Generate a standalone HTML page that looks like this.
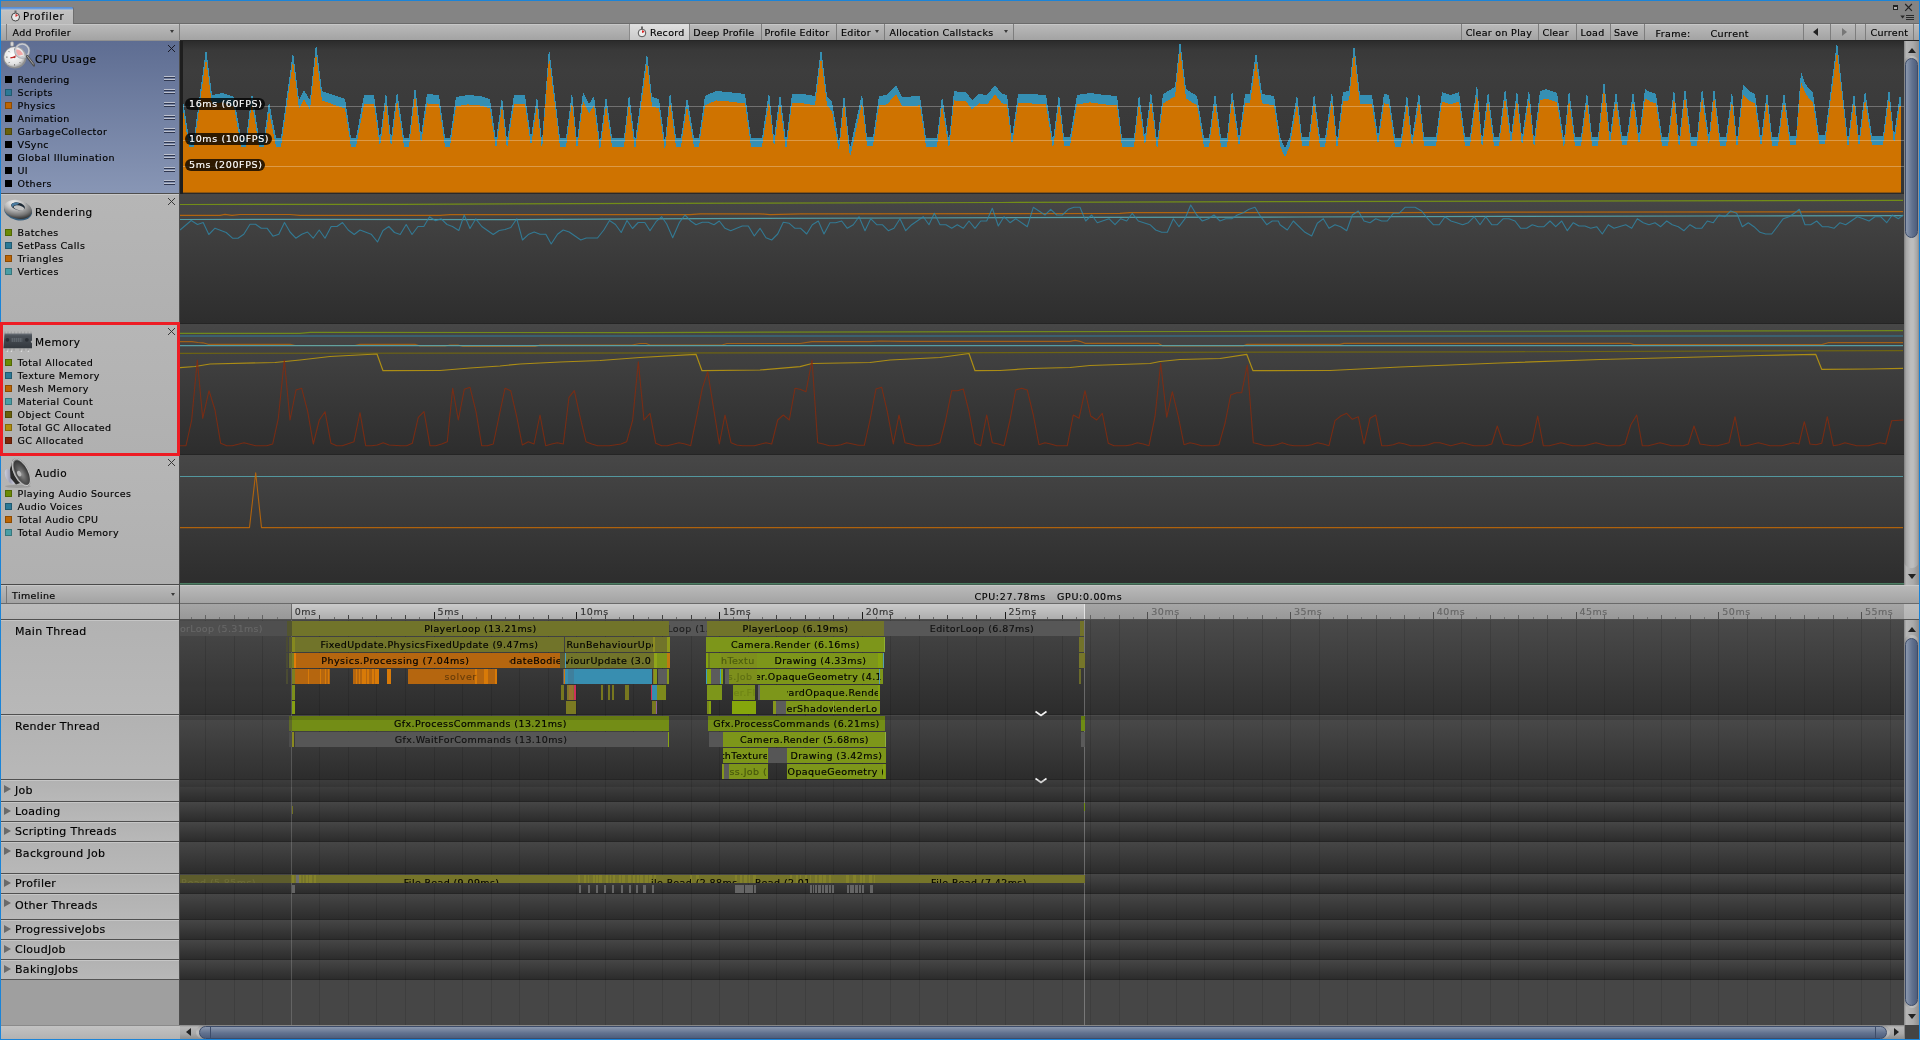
<!DOCTYPE html><html><head><meta charset="utf-8"><title>Profiler</title><style>
*{box-sizing:border-box;margin:0;padding:0}
html,body{width:1920px;height:1040px;overflow:hidden}
body{-webkit-text-stroke:.15px currentColor;background:#848484;font-family:"DejaVu Sans","Liberation Sans",sans-serif;font-size:9.5px;letter-spacing:.4px;color:#000;position:relative;-webkit-font-smoothing:antialiased}
.a{position:absolute}
.t{position:absolute;white-space:nowrap;line-height:12px}
.tb{position:absolute;top:24px;height:16px;background:linear-gradient(#c7c7c7 0,#c7c7c7 1px,#b9b9b9 1px,#a3a3a3);border-left:1px solid #7d7d7d;}
.tb span{position:absolute;top:3px;letter-spacing:.3px;white-space:nowrap;line-height:12px}
.sq{position:absolute;width:7px;height:7px;border:1px solid rgba(0,0,0,.25)}
.lg{position:absolute;left:17.5px;white-space:nowrap;line-height:12px;font-size:9.5px;letter-spacing:.42px}
.ttl{position:absolute;left:35px;white-space:nowrap;line-height:14px;font-size:10.5px;letter-spacing:.45px}
.ham{position:absolute;left:164px;width:11px;height:5px;border-top:1px solid #bcc1cf;background:linear-gradient(#2f3750 0,#2f3750 1px,transparent 1px,transparent 2px,#bcc1cf 2px,#bcc1cf 3px,#2f3750 3px,#2f3750 4px,transparent 4px)}
.bar{position:absolute;height:15px;overflow:hidden;white-space:nowrap;text-align:center;line-height:15px;font-size:9.5px;letter-spacing:.41px;color:#000}
.sec{position:absolute;left:0;width:1724px;background:linear-gradient(#464646,#2c2c2c calc(100% - 1px),#252525 calc(100% - 1px))}
.row{position:absolute;left:1px;width:178px;background:linear-gradient(#b2b2b2,#b8b8b8);border-top:1px solid #505050;box-shadow:inset 0 1px 0 #c6c6c6}
.row span{position:absolute;left:14px;top:3px;font-size:11px;letter-spacing:.3px;line-height:14px;white-space:nowrap}
.row i{position:absolute;left:3px;top:5px;width:0;height:0;border-left:7.5px solid #6a6a6a;border-top:4px solid transparent;border-bottom:4px solid transparent}
.pill{position:absolute;left:185px;height:12px;border-radius:6px;background:rgba(0,0,0,.78);color:#fff;font-size:9.5px;letter-spacing:.62px;line-height:12px;padding-left:4px;white-space:nowrap}
</style></head><body><div id="root" style="position:absolute;left:0;top:0;width:1920px;height:1040px;will-change:transform">
<div class="a" style="left:74px;top:23px;width:1845px;height:1px;background:#6b6b6b"></div>
<div class="a" style="left:1px;top:7px;width:73px;height:17px;background:linear-gradient(#4d8ad8 0,#74a2dd 2px,#c8c8c8 3px,#c2c2c2 4px,#b8b8b8);border-top:0 solid #4d8fdb;border-right:1px solid #6e6e6e;border-top-right-radius:2px"></div>
<svg class="a" style="left:10px;top:10px" width="11" height="12" viewBox="0 0 11 12"><circle cx="5.5" cy="7" r="4" fill="#e8e8e8" stroke="#444" stroke-width="1"/><rect x="4.5" y="0.5" width="2" height="2.5" fill="#666"/><path d="M5.5 7 L5.5 4 A3 3 0 0 1 8 5.5 Z" fill="#d33"/></svg>
<div class="t" style="left:23px;top:10px;font-size:10.2px;letter-spacing:.7px;line-height:13px">Profiler</div>
<svg class="a" style="left:1892px;top:3px" width="24" height="20" viewBox="0 0 24 20"><rect x="1.5" y="2.5" width="4" height="4" fill="#b0b0b0" stroke="#222" stroke-width="1"/><rect x="1" y="2" width="5" height="2" fill="#222"/><path d="M13.2 1 L19.9 7.9 M19.9 1 L13.2 7.9" stroke="#222" stroke-width="1.15"/><path d="M8.3 12.6 h4.6 l-2.3 2.9z" fill="#2a2a2a"/><path d="M14 12.5h8M14 14.5h8M14 16.5h8" stroke="#2a2a2a" stroke-width="1"/></svg>
<div class="a" style="left:1px;top:24px;width:1918px;height:16px;background:linear-gradient(#c7c7c7 0,#c7c7c7 1px,#b9b9b9 1px,#a3a3a3)"></div>
<div class="a" style="left:1px;top:40px;width:1918px;height:1px;background:#909090"></div><div class="a" style="left:180px;top:40px;width:1739px;height:1px;background:#262626"></div>
<div class="tb" style="left:6px;width:174px;border-right:1px solid #7d7d7d;"><span style="left:5.5px">Add Profiler</span><i class="a" style="left:163px;top:6px;border-top:3px solid #3a3a3a;border-left:2.5px solid transparent;border-right:2.5px solid transparent"></i></div>
<div class="tb" style="left:629px;width:60px;background:linear-gradient(#e0e0e0,#cacaca);border-left:1px solid #8a8a8a"><span style="left:20px">Record</span><svg class="a" style="left:7px;top:2px" width="10" height="12" viewBox="0 0 10 12"><circle cx="5" cy="7" r="3.8" fill="#eee" stroke="#555" stroke-width="1"/><rect x="4" y="0.5" width="2" height="2.5" fill="#666"/><path d="M5 7 L5 4.2 A2.8 2.8 0 0 1 7.6 6 Z" fill="#d22"/></svg></div>
<div class="tb" style="left:689px;width:72px;"><span style="left:3.2999999999999545px">Deep Profile</span></div>
<div class="tb" style="left:761px;width:75px;"><span style="left:2.5px">Profile Editor</span></div>
<div class="tb" style="left:836px;width:48px;"><span style="left:4px">Editor</span><i class="a" style="left:38px;top:6px;border-top:3px solid #3a3a3a;border-left:2.5px solid transparent;border-right:2.5px solid transparent"></i></div>
<div class="tb" style="left:884px;width:130px;border-right:1px solid #7d7d7d;"><span style="left:4.399999999999977px">Allocation Callstacks</span><i class="a" style="left:119px;top:6px;border-top:3px solid #3a3a3a;border-left:2.5px solid transparent;border-right:2.5px solid transparent"></i></div>
<div class="tb" style="left:1461px;width:77px;"><span style="left:3.7000000000000455px">Clear on Play</span></div>
<div class="tb" style="left:1538px;width:38px;"><span style="left:3.5px">Clear</span></div>
<div class="tb" style="left:1576px;width:34px;"><span style="left:3.5px">Load</span></div>
<div class="tb" style="left:1610px;width:35px;border-right:1px solid #7d7d7d;"><span style="left:3px">Save</span></div>
<div class="t" style="left:1655.5px;top:28px">Frame:</div>
<div class="t" style="left:1710.5px;top:28px">Current</div>
<div class="tb" style="left:1803px;width:27px"><i class="a" style="left:9px;top:4px;border-right:5px solid #222;border-top:4px solid transparent;border-bottom:4px solid transparent"></i></div>
<div class="tb" style="left:1830px;width:26px;border-right:1px solid #7d7d7d"><i class="a" style="left:11px;top:4px;border-left:5px solid #777;border-top:4px solid transparent;border-bottom:4px solid transparent"></i></div>
<div class="tb" style="left:1865px;width:49px;border-right:1px solid #7d7d7d;"><span style="left:4.5px">Current</span></div>
<div class="a" style="left:1px;top:41px;width:178px;height:152px;background:linear-gradient(#5e6d92,#8896b5)"></div>
<div class="a" style="left:1px;top:193px;width:178px;height:1px;background:#4e4e4e"></div>
<svg class="a" style="left:1.6px;top:41.2px" width="33.5" height="29.3" viewBox="0 0 32 28">
<defs><radialGradient id="g1" cx="42%" cy="38%" r="68%"><stop offset="0" stop-color="#fff"/><stop offset=".7" stop-color="#e2e2e2"/><stop offset="1" stop-color="#8f8f8f"/></radialGradient></defs>
<rect x="8" y="0.8" width="3.2" height="4.2" rx="1.2" fill="#d6d6d6" stroke="#8a8a8a" stroke-width=".6"/>
<ellipse cx="12.3" cy="15.8" rx="11" ry="10.6" fill="#8e8e8e"/>
<ellipse cx="12" cy="15.4" rx="10" ry="9.6" fill="url(#g1)"/>
<g stroke="#777" stroke-width=".9"><path d="M12 7.2v1.6M12 22v1.6M3.8 15.4h1.6M18.6 15.4h1.6M6.2 9.6l1.1 1.1M16.7 20.1l1.1 1.1M6.2 21.2l1.1-1.1M16.7 10.7l1.1-1.1"/></g>
<path d="M12 15.4 L13.6 8 A8 8 0 0 1 20.2 13 Z" fill="#ee8f8f"/>
<path d="M12 15.4 L8 16.2" stroke="#c62222" stroke-width="1.3"/>
<circle cx="12" cy="15.4" r="1" fill="#a33"/>
<circle cx="19.3" cy="9.3" r="6.6" fill="rgba(255,255,255,.22)" stroke="#c8cbd0" stroke-width="1.7"/>
<circle cx="19.3" cy="9.3" r="7.4" fill="none" stroke="#8d9097" stroke-width=".5"/>
<path d="M24 14.6 L30.6 23.2" stroke="#4e4e4e" stroke-width="2.6" stroke-linecap="round"/>
<path d="M24 14.2 L30.2 22.4" stroke="#b5b5b5" stroke-width=".8"/>
</svg>
<div class="ttl" style="top:52px">CPU Usage</div>
<svg class="a" style="left:167px;top:44px" width="9" height="9" viewBox="0 0 9 9"><path d="M1 1 L8 8 M8 1 L1 8" stroke="#15151f" stroke-width=".95"/></svg>
<div class="sq" style="left:5px;top:76px;background:#000"></div><div class="lg" style="top:74px">Rendering</div>
<div class="ham" style="top:76px"></div>
<div class="sq" style="left:5px;top:89px;background:#2c7996"></div><div class="lg" style="top:87px">Scripts</div>
<div class="ham" style="top:89px"></div>
<div class="sq" style="left:5px;top:102px;background:#bd6503"></div><div class="lg" style="top:100px">Physics</div>
<div class="ham" style="top:102px"></div>
<div class="sq" style="left:5px;top:115px;background:#000"></div><div class="lg" style="top:113px">Animation</div>
<div class="ham" style="top:115px"></div>
<div class="sq" style="left:5px;top:128px;background:#6a610b"></div><div class="lg" style="top:126px">GarbageCollector</div>
<div class="ham" style="top:128px"></div>
<div class="sq" style="left:5px;top:141px;background:#000"></div><div class="lg" style="top:139px">VSync</div>
<div class="ham" style="top:141px"></div>
<div class="sq" style="left:5px;top:154px;background:#000"></div><div class="lg" style="top:152px">Global Illumination</div>
<div class="ham" style="top:154px"></div>
<div class="sq" style="left:5px;top:167px;background:#000"></div><div class="lg" style="top:165px">UI</div>
<div class="ham" style="top:167px"></div>
<div class="sq" style="left:5px;top:180px;background:#000"></div><div class="lg" style="top:178px">Others</div>
<div class="ham" style="top:180px"></div>
<div class="a" style="left:1px;top:194px;width:178px;height:130px;background:linear-gradient(#b6b6b6,#b0b0b0);border-bottom:1px solid #565656;box-shadow:inset 0 1px 0 #c9c9c9"></div>
<svg class="a" style="left:3px;top:198px" width="31" height="24" viewBox="0 0 31 24">
<defs><radialGradient id="g2" cx="32%" cy="22%" r="85%"><stop offset="0" stop-color="#f6f6f6"/><stop offset=".4" stop-color="#bdbdbd"/><stop offset=".75" stop-color="#757575"/><stop offset="1" stop-color="#2b2b2b"/></radialGradient></defs>
<g transform="rotate(13 15 12)">
<ellipse cx="15.2" cy="12.6" rx="14.2" ry="9.6" fill="#3a5f7c"/>
<ellipse cx="14.8" cy="11.4" rx="14.2" ry="9.2" fill="url(#g2)"/>
<ellipse cx="14.2" cy="8.4" rx="7" ry="3.7" fill="#1d2a36"/>
<path d="M7.4 8.4 A7 3.7 0 0 1 15 4.7 L13 7 Q9.5 7.5 9 10.6 Z" fill="#4a7ba0"/>
<ellipse cx="15.4" cy="9.7" rx="5.4" ry="2.3" fill="#c2c2c2"/>
</g>
</svg>
<div class="ttl" style="top:205px">Rendering</div>
<svg class="a" style="left:167px;top:197px" width="9" height="9" viewBox="0 0 9 9"><path d="M1 1 L8 8 M8 1 L1 8" stroke="#333" stroke-width=".95"/></svg>
<div class="sq" style="left:5px;top:229px;background:#6c8b06"></div><div class="lg" style="top:227px">Batches</div>
<div class="sq" style="left:5px;top:242px;background:#2c7996"></div><div class="lg" style="top:240px">SetPass Calls</div>
<div class="sq" style="left:5px;top:255px;background:#bd6503"></div><div class="lg" style="top:253px">Triangles</div>
<div class="sq" style="left:5px;top:268px;background:#4a9ea6"></div><div class="lg" style="top:266px">Vertices</div>
<div class="a" style="left:1px;top:324px;width:178px;height:131px;background:linear-gradient(#b6b6b6,#b0b0b0);border-bottom:1px solid #565656;box-shadow:inset 0 1px 0 #c9c9c9"></div>
<svg class="a" style="left:3px;top:330px" width="31" height="24" viewBox="0 0 31 24">
<defs><linearGradient id="g4" x1="0" y1="0" x2="0" y2="1"><stop offset="0" stop-color="#6a7078"/><stop offset=".15" stop-color="#4b5158"/><stop offset="1" stop-color="#33383e"/></linearGradient></defs>
<path d="M2 4v-2.4M5 4v-2.4M8.3 4v-2.4M11.6 4v-2.4M15 4v-2.4M18.3 4v-2.4M21.6 4v-2.4M25 4v-2.4M28 4v-2.4" stroke="#a2a2a2" stroke-width="1.3"/>
<path d="M3 18.5v2.6M7 18.5v2.6M11 18.5v2.6M17 18.5v2.6M21 18.5v2.6M25 18.5v2.6" stroke="#9c9c9c" stroke-width="1.6" opacity=".7"/>
<circle cx="4.4" cy="21.3" r=".8" fill="#e0e0e0"/><circle cx="8.4" cy="21.3" r=".8" fill="#e0e0e0"/><circle cx="18.4" cy="21.3" r=".8" fill="#e0e0e0"/><circle cx="25.4" cy="21.3" r=".8" fill="#e0e0e0"/>
<path d="M1.5 3.6 H29 V10.4 L27.6 11.8 L29 13.2 V18.3 H0.4 Z" fill="url(#g4)"/>
<circle cx="4.4" cy="9.8" r="1.9" fill="#2b3036"/><circle cx="23.8" cy="9.8" r="1.9" fill="#2b3036"/>
<path d="M8.6 9h10.8M8.6 11h10.8" stroke="#8c949c" stroke-width=".9" stroke-dasharray="1.6 .5" opacity=".8"/>
</svg>
<div class="ttl" style="top:335px">Memory</div>
<svg class="a" style="left:167px;top:327px" width="9" height="9" viewBox="0 0 9 9"><path d="M1 1 L8 8 M8 1 L1 8" stroke="#333" stroke-width=".95"/></svg>
<div class="sq" style="left:5px;top:359px;background:#6c8b06"></div><div class="lg" style="top:357px">Total Allocated</div>
<div class="sq" style="left:5px;top:372px;background:#2c7996"></div><div class="lg" style="top:370px">Texture Memory</div>
<div class="sq" style="left:5px;top:385px;background:#bd6503"></div><div class="lg" style="top:383px">Mesh Memory</div>
<div class="sq" style="left:5px;top:398px;background:#4a9ea6"></div><div class="lg" style="top:396px">Material Count</div>
<div class="sq" style="left:5px;top:411px;background:#6a610b"></div><div class="lg" style="top:409px">Object Count</div>
<div class="sq" style="left:5px;top:424px;background:#b08d0c"></div><div class="lg" style="top:422px">Total GC Allocated</div>
<div class="sq" style="left:5px;top:437px;background:#7e2508"></div><div class="lg" style="top:435px">GC Allocated</div>
<div class="a" style="left:1px;top:455px;width:178px;height:130px;background:linear-gradient(#b6b6b6,#b0b0b0);border-bottom:1px solid #565656;box-shadow:inset 0 1px 0 #c9c9c9"></div>
<svg class="a" style="left:3px;top:456px" width="31" height="32" viewBox="0 0 31 32">
<defs><radialGradient id="g3" cx="45%" cy="55%" r="60%"><stop offset="0" stop-color="#8a8a8a"/><stop offset=".5" stop-color="#5a5a5a"/><stop offset="1" stop-color="#2e2e2e"/></radialGradient>
<linearGradient id="g5" x1="0" y1="0" x2="1" y2="1"><stop offset="0" stop-color="#dfe1ee"/><stop offset=".5" stop-color="#9ea0b4"/><stop offset="1" stop-color="#e8e8f0"/></linearGradient></defs>
<ellipse cx="15" cy="30.3" rx="13" ry="1.6" fill="rgba(0,0,0,.13)"/>
<ellipse cx="7" cy="20.6" rx="4.2" ry="8.2" fill="url(#g5)" transform="rotate(-27 7 20.6)"/>
<path d="M10 3.5 L7 13 L7.5 22 L13 28.5 L20 26 L14 6 Z" fill="#2a2a2a"/>
<ellipse cx="18.3" cy="16.2" rx="7.6" ry="15.4" fill="#8f8f8f" transform="rotate(-27 18.3 16.2)"/>
<ellipse cx="18.3" cy="16.2" rx="7" ry="14.8" fill="none" stroke="#d4d4d4" stroke-width=".7" transform="rotate(-27 18.3 16.2)"/>
<ellipse cx="18.7" cy="16.5" rx="6" ry="13.4" fill="url(#g3)" transform="rotate(-27 18.7 16.5)"/>
<ellipse cx="16.2" cy="17.6" rx="1.9" ry="2.9" fill="#b9b9b9" transform="rotate(-27 16.2 17.6)"/>
</svg>
<div class="ttl" style="top:466px">Audio</div>
<svg class="a" style="left:167px;top:458px" width="9" height="9" viewBox="0 0 9 9"><path d="M1 1 L8 8 M8 1 L1 8" stroke="#333" stroke-width=".95"/></svg>
<div class="sq" style="left:5px;top:490px;background:#6c8b06"></div><div class="lg" style="top:488px">Playing Audio Sources</div>
<div class="sq" style="left:5px;top:503px;background:#2c7996"></div><div class="lg" style="top:501px">Audio Voices</div>
<div class="sq" style="left:5px;top:516px;background:#bd6503"></div><div class="lg" style="top:514px">Total Audio CPU</div>
<div class="sq" style="left:5px;top:529px;background:#4a9ea6"></div><div class="lg" style="top:527px">Total Audio Memory</div>
<div class="a" style="left:180px;top:41px;width:1724px;height:153px;background:linear-gradient(#2b2b2b 0,#393939 9px,#3d3d3d 30px,#343434 100%)"></div>
<div class="a" style="left:180px;top:194px;width:1724px;height:130px;background:linear-gradient(#474747,#2d2d2d);border-bottom:1px solid #252525"></div>
<div class="a" style="left:180px;top:324px;width:1724px;height:131px;background:linear-gradient(#474747,#2d2d2d);border-bottom:1px solid #252525"></div>
<div class="a" style="left:180px;top:455px;width:1724px;height:129px;background:linear-gradient(#474747,#2d2d2d);border-bottom:1px solid #252525"></div>
<div class="a" style="left:180px;top:584px;width:1724px;height:2px;background:#333"></div>
<svg class="a" style="left:180px;top:41px" width="1724" height="545" viewBox="180 41 1724 545"><polygon shape-rendering="crispEdges" fill="#358fb3" points="183,193 183,100 184,107 189,138 194,138 206,48.5 212,95 222,93 234,97 241,138 246,138 252,92.5 259,138 264,138 269,101.5 276,138 281,138 293,51.5 299,100 304,90 310,100 316,43.5 322,91 333,95 345,99 351,138 356,138 364,95 374,95 380,138.5 386,91.5 391,138.5 397,90.5 404,138 409,138 415,85.5 421,135.5 427,94 439,95 445,138 450,138 456,97 468,95 480,96 490,99 496,140.5 502,96.5 507,140.5 514,95 525,95 531,137.5 537,95.5 542,141.5 549,47.5 560,138 566,138 572,91.5 577,141.5 583,92 589,104 594,96 600,142.5 606,95.5 612,138 624,138 629,93.5 635,141.5 647,52.5 652,97 659,99 665,142.5 670,91.5 676,138 681,138 687,96.5 694,138 699,138 705,96 716,91 728,92 745,94 751,138 762,138 769,91.5 774,138.5 780,93.5 786,141.5 792,94 803,94 815,96 821,47.5 827,96 832,102 839,142.5 844,93.5 850,148.5 862,93.5 867,137 873,137 879,96 887,95 896,85 902,97 920,96 926,138 937,138 942,95.5 949,140.5 954,91 960,92 966,92 972,100 979,94 987,95 995,85 1002,94 1007,95 1012,137 1018,94 1030,94 1046,95 1053,140.5 1059,93.5 1064,137 1070,137 1077,95 1090,93 1105,95 1117,96 1122,138 1134,138 1139,93.5 1145,137.5 1151,90.5 1157,141.5 1163,94 1175,87 1180,39.5 1186,89 1197,96 1204,138 1209,138 1215,92.5 1221,138 1227,138 1232,89.5 1239,138.5 1245,94 1250,94 1256,51.5 1262,94 1274,96 1280,136.5 1285,148.5 1290,136.5 1297,93.5 1302,137 1309,137 1314,92.5 1320,138 1325,138 1332,90.5 1337,141.5 1343,92 1349,91 1354,43.5 1360,95 1372,95 1378,136.5 1384,94 1389,95 1395,138 1401,138 1407,93.5 1412,138.5 1419,91.5 1424,137 1436,137 1442,92 1450,95 1459,92 1465,137 1470,137 1477,83.5 1482,140.5 1488,90.5 1494,137 1499,137 1505,87.5 1511,135.5 1517,89.5 1522,137.5 1529,88.5 1534,140.5 1540,91 1546,89 1557,93 1564,140.5 1569,89.5 1575,137 1581,137 1587,91.5 1592,137 1598,137 1604,79.5 1610,135.5 1616,90.5 1622,136 1627,136 1633,90.5 1639,136.5 1645,89 1650,92 1656,94 1662,137 1668,137 1674,87.5 1679,140.5 1685,86.5 1691,137 1697,137 1702,87.5 1709,137.5 1714,86.5 1720,137 1726,137 1732,90.5 1737,140.5 1743,85 1749,91 1755,94 1761,138.5 1767,90.5 1772,137 1778,137 1784,91.5 1790,136 1796,136 1801,72 1805,83 1809,89 1813,93 1819,135 1825,135 1837,41.5 1848,140.5 1854,91.5 1859,139.5 1865,89.5 1872,136 1883,136 1889,87.5 1894,135.5 1900,94 1901,100 1901,193"/><polygon shape-rendering="crispEdges" fill="#cf7300" points="183,193 183,109.4 184,116.4 189,146.7 194,146.7 206,57.9 212,104.4 222,102.4 234,106.4 241,146.7 246,146.7 252,101.9 259,146.7 264,146.7 269,110.9 276,146.7 281,146.7 293,60.9 299,109.4 304,99.4 310,109.4 316,52.9 322,100.4 333,104.4 345,108.4 351,146.7 356,146.7 364,104.4 374,104.4 380,147.5 386,100.9 391,147.5 397,99.9 404,146.7 409,146.7 415,94.9 421,144.5 427,103.4 439,104.4 445,146.7 450,146.7 456,106.4 468,104.4 480,105.4 490,108.4 496,149.5 502,105.9 507,149.5 514,104.4 525,104.4 531,146.5 537,104.9 542,150.5 549,56.9 560,146.7 566,146.7 572,100.9 577,150.5 583,101.4 589,113.4 594,105.4 600,151.5 606,104.9 612,146.7 624,146.7 629,102.9 635,150.5 647,61.9 652,106.4 659,108.4 665,151.5 670,100.9 676,146.7 681,146.7 687,105.9 694,146.7 699,146.7 705,105.4 716,100.4 728,101.4 745,103.4 751,146.7 762,146.7 769,100.9 774,147.5 780,102.9 786,150.5 792,103.4 803,103.4 815,105.4 821,56.9 827,105.4 832,111.4 839,151.5 844,102.9 850,157.5 862,102.9 867,145.7 873,145.7 879,105.4 887,104.4 896,94.4 902,106.4 920,105.4 926,146.7 937,146.7 942,104.9 949,149.5 954,100.4 960,101.4 966,101.4 972,109.4 979,103.4 987,104.4 995,94.4 1002,103.4 1007,104.4 1012,145.7 1018,103.4 1030,103.4 1046,104.4 1053,149.5 1059,102.9 1064,145.7 1070,145.7 1077,104.4 1090,102.4 1105,104.4 1117,105.4 1122,146.7 1134,146.7 1139,102.9 1145,146.5 1151,99.9 1157,150.5 1163,103.4 1175,96.4 1180,48.9 1186,98.4 1197,105.4 1204,146.7 1209,146.7 1215,101.9 1221,146.7 1227,146.7 1232,98.9 1239,147.5 1245,103.4 1250,103.4 1256,60.9 1262,103.4 1274,105.4 1280,145.5 1285,157.5 1290,145.5 1297,102.9 1302,145.7 1309,145.7 1314,101.9 1320,146.7 1325,146.7 1332,99.9 1337,150.5 1343,101.4 1349,100.4 1354,52.9 1360,104.4 1372,104.4 1378,145.5 1384,103.4 1389,104.4 1395,146.7 1401,146.7 1407,102.9 1412,147.5 1419,100.9 1424,145.7 1436,145.7 1442,101.4 1450,104.4 1459,101.4 1465,145.7 1470,145.7 1477,92.9 1482,149.5 1488,99.9 1494,145.7 1499,145.7 1505,96.9 1511,144.5 1517,98.9 1522,146.5 1529,97.9 1534,149.5 1540,100.4 1546,98.4 1557,102.4 1564,149.5 1569,98.9 1575,145.7 1581,145.7 1587,100.9 1592,145.7 1598,145.7 1604,88.9 1610,144.5 1616,99.9 1622,144.7 1627,144.7 1633,99.9 1639,145.5 1645,98.4 1650,101.4 1656,103.4 1662,145.7 1668,145.7 1674,96.9 1679,149.5 1685,95.9 1691,145.7 1697,145.7 1702,96.9 1709,146.5 1714,95.9 1720,145.7 1726,145.7 1732,99.9 1737,149.5 1743,94.4 1749,100.4 1755,103.4 1761,147.5 1767,99.9 1772,145.7 1778,145.7 1784,100.9 1790,144.7 1796,144.7 1801,81.4 1805,92.4 1809,98.4 1813,102.4 1819,143.7 1825,143.7 1837,50.9 1848,149.5 1854,100.9 1859,148.5 1865,98.9 1872,144.7 1883,144.7 1889,96.9 1894,144.5 1900,103.4 1901,109.4 1901,193"/><rect x="180" y="192.6" width="1724" height="1.4" fill="#2a2a2a"/><line x1="183" x2="1904" y1="106.5" y2="106.5" stroke="#fff" stroke-opacity=".28" stroke-width="1"/><line x1="183" x2="1904" y1="140.5" y2="140.5" stroke="#fff" stroke-opacity=".28" stroke-width="1"/><line x1="183" x2="1904" y1="166.5" y2="166.5" stroke="#fff" stroke-opacity=".28" stroke-width="1"/><polyline fill="none" stroke="#7a9a10" stroke-width="1.2" stroke-opacity="0.85" stroke-linejoin="round" points="180,204.5 400,204.3 650,203.3 1000,202.5 1400,201.3 1903,200.3"/><polyline fill="none" stroke="#c46a05" stroke-width="1.2" stroke-opacity="0.85" stroke-linejoin="round" points="180,215.3 220,215.3 225,214.3 232,215.3 240,214.5 290,214.5 300,215.4 440,215.4 450,214.6 690,214.6 700,213.8 760,213.8 770,214.6 800,213.8 1120,213.4 1130,212.6 1400,212.6 1500,212.2 1800,211.8 1903,211.6"/><polyline fill="none" stroke="#58adb5" stroke-width="1.2" stroke-opacity="0.85" stroke-linejoin="round" points="180,219.5 300,219.3 500,219.6 700,218.6 900,218 1100,217.4 1300,217 1500,216.4 1700,216 1903,215.6"/><polyline fill="none" stroke="#2f86a6" stroke-width="1.1" stroke-opacity="0.82" stroke-linejoin="round" points="180,230 180.0,230.0 191.2,220.5 197.5,224.5 203.2,222.5 208.8,234.5 215.0,228.2 226.2,232.5 232.5,238.2 238.0,238.2 243.8,234.2 250.0,224.2 255.5,224.2 261.2,228.2 267.0,228.2 273.0,236.2 278.8,234.2 284.5,222.5 290.0,232.0 295.8,238.2 301.8,234.2 307.5,232.0 313.2,238.2 319.2,230.0 325.0,238.2 331.2,226.5 337.0,226.5 342.5,222.5 348.2,230.0 354.2,234.5 360.0,230.0 371.2,234.2 377.5,242.0 383.0,230.5 388.8,226.5 394.5,232.5 400.2,234.5 406.2,224.5 412.0,234.5 418.0,226.5 423.8,226.5 429.5,216.8 435.5,220.8 441.2,218.8 447.0,224.5 452.5,226.5 458.8,230.5 464.2,215.0 470.0,228.5 475.8,218.8 481.8,226.5 493.2,234.5 499.2,230.5 505.0,229.5 510.8,227.5 516.8,218.8 522.5,240.0 528.8,234.2 534.2,232.0 540.0,234.2 545.8,234.2 551.2,244.0 557.5,234.2 563.2,230.0 569.2,232.0 580.8,240.0 586.2,238.0 597.5,238.0 603.8,230.0 609.5,220.5 615.5,224.5 621.2,232.5 627.0,220.5 632.5,228.5 638.2,222.5 644.2,222.5 645.0,222.7 650.0,230.7 656.0,221.7 661.7,216.7 666.7,224.0 672.7,237.7 679.3,222.7 685.0,215.0 690.7,221.0 696.0,224.7 702.3,222.3 708.3,222.3 714.0,224.7 719.3,221.0 725.0,228.3 730.7,230.7 736.7,228.3 742.3,226.0 748.3,226.0 754.3,236.0 760.0,228.3 766.0,237.7 771.7,240.0 777.7,234.0 783.3,222.3 789.3,223.3 795.0,228.3 800.7,228.3 806.7,234.0 812.3,224.7 818.3,221.0 824.0,234.0 830.0,222.7 835.7,222.7 841.7,221.0 847.3,228.3 853.3,224.7 859.0,216.7 865.0,230.7 870.7,218.7 876.7,224.7 882.3,224.7 888.3,230.7 894.0,228.3 900.0,218.7 905.7,230.7 911.7,224.7 923.3,216.7 929.0,224.7 934.3,213.3 940.0,224.7 946.0,224.7 951.7,228.3 957.3,224.7 963.3,228.3 969.0,221.0 975.0,228.3 980.7,221.0 986.7,221.0 992.3,208.3 998.3,226.0 1004.0,216.7 1010.0,222.7 1015.7,218.7 1027.3,226.7 1033.3,207.3 1045.0,215.0 1050.7,209.3 1056.7,215.0 1062.3,215.0 1068.3,209.3 1074.0,207.3 1080.0,207.3 1085.7,221.0 1091.7,215.0 1097.3,222.7 1109.0,218.7 1115.0,224.7 1120.7,218.7 1126.7,221.0 1132.3,213.3 1138.3,221.0 1150.0,224.7 1155.7,230.0 1161.7,232.3 1167.3,232.3 1173.3,218.7 1179.0,226.7 1185.0,218.7 1190.7,205.0 1196.7,215.0 1202.3,221.0 1208.3,218.7 1214.0,215.0 1220.0,221.0 1225.7,218.7 1231.7,218.7 1237.3,215.0 1243.3,212.7 1249.0,209.3 1255.0,207.3 1260.7,216.7 1266.7,224.7 1272.3,221.0 1278.3,221.0 1280.0,224.7 1287.3,230.0 1293.3,221.0 1305.0,232.3 1311.7,236.0 1317.3,223.3 1323.3,218.7 1329.0,228.3 1335.0,224.7 1340.7,226.7 1346.7,230.7 1352.3,215.0 1358.3,211.0 1364.0,221.0 1370.0,222.7 1375.7,218.7 1381.7,221.0 1387.3,221.0 1393.3,213.3 1399.0,213.3 1405.0,207.3 1415.0,207.3 1421.7,211.0 1427.7,218.7 1433.3,224.7 1439.3,224.7 1445.0,216.7 1451.0,221.0 1456.7,222.7 1462.7,224.7 1468.3,222.7 1474.3,216.7 1480.0,224.7 1485.7,216.7 1491.7,224.7 1497.3,224.7 1503.3,218.7 1509.0,218.7 1515.0,221.0 1520.7,228.3 1526.7,228.3 1532.3,224.7 1538.3,226.7 1544.0,226.7 1550.0,221.0 1555.7,226.7 1561.7,221.0 1567.3,230.7 1573.3,222.7 1579.0,226.0 1585.0,226.0 1590.7,228.3 1596.7,226.7 1602.3,234.0 1608.3,224.7 1614.0,228.3 1625.7,224.7 1631.7,228.3 1637.3,218.7 1643.3,222.7 1649.0,224.7 1655.0,222.7 1660.7,226.7 1666.7,221.0 1672.3,224.7 1678.3,226.7 1684.0,230.7 1690.0,224.7 1695.7,228.3 1701.7,228.3 1707.3,221.0 1713.3,222.7 1719.0,215.0 1725.0,216.7 1730.7,211.0 1736.7,213.3 1742.3,226.7 1748.3,222.7 1754.0,226.7 1760.0,232.3 1765.7,234.0 1771.7,234.0 1783.3,218.7 1789.0,216.7 1795.0,212.7 1799.3,209.3 1805.0,224.7 1810.7,224.7 1816.7,221.0 1822.3,226.7 1828.3,226.7 1834.0,228.3 1840.0,222.7 1845.7,224.7 1857.3,216.7 1863.3,218.7 1869.0,221.0 1875.0,216.7 1880.7,216.7 1886.7,222.7 1892.3,215.0 1898.3,218.7 1903.3,215.0"/><polyline fill="none" stroke="#7a9a10" stroke-width="1.2" stroke-opacity="0.8" stroke-linejoin="round" points="180,333.4 300,333.3 310,332.4 640,332.6 900,331.8 1200,331.5 1600,331.2 1903,330.6"/><polyline fill="none" stroke="#2f86a6" stroke-width="1.2" stroke-opacity="0.85" stroke-linejoin="round" points="180,336 1903,336"/><polyline fill="none" stroke="#c46a05" stroke-width="1.2" stroke-opacity="0.72" stroke-linejoin="round" points="180,341.7 192,341.7 198,342.5 203,342.8 208,344.3 290,344.3 295,345.5 355,345.5 360,344.3 415,344.3 420,346 445,346 450,345 458,345 463,346.5 535,346.5 540,345 632,345 640,343.5 646,343.5 650,345 722,345 727,343.5 800,343.5 812,341.7 870,341.7 880,341 900,341.3 1070,341.3 1075,340.3 1080,341.3 1085,343.3 1158,343.3 1163,346 1243,346 1247,344.3 1340,344.3 1344,343.3 1630,343.3 1634,344.6 1822,344.6 1828,342.7 1903,342.7"/><polyline fill="none" stroke="#58adb5" stroke-width="1.2" stroke-opacity="0.85" stroke-linejoin="round" points="180,345.7 1903,345.7"/><polyline fill="none" stroke="#72680d" stroke-width="1.2" stroke-opacity="0.9" stroke-linejoin="round" points="180,353.3 900,352.8 1500,351.8 1903,350.6"/><polyline fill="none" stroke="#b8960f" stroke-width="1.2" stroke-opacity="0.9" stroke-linejoin="round" points="180,367.7 195,366.5 210,364 275,362.5 300,360 330,356.5 377,354 383,370.7 440,370.5 470,368 500,366 520,364 560,362 600,360.5 640,357.5 696,354.3 702,370.7 760,370 800,366.7 812,363.5 870,362.5 890,360 940,357.5 969,353.5 975,370.7 1000,370.5 1030,368.5 1070,367.5 1090,365.5 1150,363.5 1160,361.5 1180,359.5 1220,358.5 1246.7,354.3 1253,370.7 1330,370.5 1400,367 1500,363 1600,359.5 1700,357 1760,355.5 1815.7,354.3 1821.7,369.3 1870,369 1903,368.3"/><polyline fill="none" stroke="#8a2a0c" stroke-width="1.1" stroke-opacity="0.8" stroke-linejoin="round" points="180,445.7 180.0,445.7 186.0,445.7 191.7,420.0 197.3,360.0 202.7,418.3 209.0,390.7 215.0,410.0 220.7,443.3 226.7,445.7 232.3,445.7 244.0,442.7 255.7,445.7 266.7,445.7 272.7,444.0 278.3,418.3 284.3,360.0 290.0,420.0 296.0,390.0 301.7,388.3 307.7,411.7 313.3,444.0 319.3,420.0 325.0,411.7 331.0,443.3 336.7,445.7 342.3,445.7 354.0,441.7 360.0,412.7 365.7,445.7 371.7,445.7 377.3,445.0 383.3,442.7 389.0,445.0 400.7,445.7 406.7,445.7 412.3,443.3 418.3,417.3 424.0,411.7 430.0,445.7 435.7,445.7 441.7,444.0 447.3,441.7 452.7,388.3 458.3,420.0 464.3,389.3 470.0,387.3 476.0,411.7 481.7,445.7 487.3,445.7 493.3,444.0 499.0,416.7 505.0,388.3 510.7,390.7 516.7,416.7 522.3,445.0 528.3,441.7 534.0,444.0 540.0,415.0 545.7,445.7 551.7,444.0 557.3,442.7 563.3,444.0 569.0,397.3 574.3,390.7 580.0,416.7 586.0,441.7 591.7,444.0 597.7,445.7 609.3,445.7 621.0,444.0 626.7,441.7 632.7,420.0 638.3,361.7 644.0,420.0 650.0,413.3 655.7,443.3 661.7,445.7 667.3,445.7 679.0,442.7 685.0,444.0 690.7,445.7 696.7,416.7 702.3,388.3 707.7,371.7 713.3,406.7 719.3,444.0 725.0,415.0 731.0,442.7 736.7,445.0 742.7,445.7 754.3,445.7 766.0,442.7 771.7,444.0 777.7,420.0 783.3,415.0 789.3,420.0 795.0,388.3 800.0,389.3 806.0,391.7 812.0,360.0 817.7,442.7 823.3,444.0 829.3,445.7 835.0,445.7 841.0,444.7 846.7,442.7 852.7,444.0 858.3,445.3 864.3,445.3 870.0,420.0 876.0,389.0 881.7,387.3 887.3,411.7 893.3,444.0 899.0,415.0 905.0,442.7 910.7,444.0 916.7,445.7 928.3,445.7 934.0,444.7 940.0,442.7 945.7,420.0 951.7,390.7 957.3,390.7 963.3,389.0 969.0,411.7 975.0,443.3 980.7,445.7 986.7,415.0 992.3,442.7 998.3,444.0 1004.0,445.7 1010.0,420.0 1015.7,390.0 1021.7,388.3 1027.3,390.0 1033.3,415.0 1039.0,444.7 1045.0,442.7 1050.7,444.0 1056.7,445.7 1067.3,445.7 1073.3,415.0 1079.0,418.3 1085.0,390.7 1090.7,416.0 1096.7,420.0 1102.3,413.3 1108.3,443.3 1114.0,445.7 1125.7,445.7 1131.7,444.7 1137.3,442.7 1143.3,444.0 1149.0,445.7 1155.0,416.7 1160.7,363.3 1166.7,417.3 1172.3,391.7 1178.3,416.7 1184.0,444.7 1190.0,442.7 1195.7,444.0 1201.7,445.7 1213.3,445.7 1219.0,444.7 1225.0,423.3 1230.7,395.0 1236.7,392.7 1241.7,392.7 1247.3,365.0 1253.3,442.7 1259.0,444.0 1265.0,445.7 1270.7,445.7 1276.7,444.7 1282.3,442.7 1288.3,444.7 1294.0,445.7 1305.7,445.7 1311.7,444.7 1317.3,442.7 1323.3,444.0 1329.0,445.7 1335.0,420.7 1340.7,416.0 1346.7,413.3 1352.3,419.3 1358.3,416.7 1364.0,444.0 1370.0,418.3 1375.7,415.0 1381.7,445.7 1387.3,445.7 1393.3,444.7 1399.0,442.7 1405.0,444.0 1410.7,445.7 1422.3,445.7 1428.3,444.7 1434.0,442.7 1440.0,442.7 1450.7,445.7 1462.3,442.7 1474.0,445.7 1485.7,445.7 1491.7,444.0 1497.3,426.0 1503.3,444.0 1515.0,445.7 1520.7,445.7 1532.3,441.7 1537.7,416.0 1543.3,445.7 1549.3,445.7 1561.0,442.7 1572.7,445.7 1584.3,445.7 1596.0,442.7 1607.7,445.7 1619.3,445.7 1625.0,444.0 1630.7,425.0 1636.7,415.0 1642.3,445.7 1648.3,445.7 1660.0,442.7 1671.7,445.7 1683.3,445.7 1688.3,444.0 1694.0,426.0 1700.0,444.0 1711.7,445.7 1717.3,445.7 1729.0,442.7 1735.0,416.7 1740.7,445.7 1746.7,445.7 1758.3,442.7 1770.0,445.7 1781.7,445.7 1793.3,442.7 1799.0,444.0 1804.3,421.7 1810.0,444.0 1816.0,444.7 1821.7,443.3 1827.3,416.7 1833.3,445.7 1839.3,444.7 1845.0,442.7 1856.7,445.7 1868.3,445.7 1880.0,442.7 1885.7,444.0 1891.7,420.7 1903.3,420.0"/><polyline fill="none" stroke="#58adb5" stroke-width="1.1" stroke-opacity="0.8" stroke-linejoin="round" points="180,476.5 1903,476.5"/><polyline fill="none" stroke="#c46a05" stroke-width="1.1" stroke-opacity="0.85" stroke-linejoin="round" points="180,527.6 249.5,527.6 255.7,472.8 261.5,527.6 1903,527.6"/><rect x="180" y="583" width="1724" height="1.6" fill="#4b7d62"/></svg>
<div class="pill" style="top:98px;width:80px">16ms (60FPS)</div>
<div class="pill" style="top:133px;width:87px">10ms (100FPS)</div>
<div class="pill" style="top:159px;width:80px">5ms (200FPS)</div>
<div class="a" style="left:1px;top:584px;width:178px;height:1px;background:#4a4a4a"></div>
<div class="a" style="left:1px;top:585px;width:1918px;height:18px;background:linear-gradient(#c7c7c7 0,#c7c7c7 1px,#b9b9b9 1px,#a3a3a3)"></div>
<div class="a" style="left:1px;top:603px;width:1918px;height:1px;background:#6a6a6a"></div>
<div class="a" style="left:6px;top:586px;width:174px;height:17px;border-left:1px solid #777;border-right:1px solid #777"><span class="t" style="left:5px;top:4px">Timeline</span><i class="a" style="left:164px;top:7px;border-top:3px solid #3a3a3a;border-left:2.5px solid transparent;border-right:2.5px solid transparent"></i></div>
<div class="t" style="left:974.5px;top:591px;letter-spacing:.68px">CPU:27.78ms &nbsp; GPU:0.00ms</div>
<div class="a" style="left:1px;top:604px;width:178px;height:16px;background:linear-gradient(#bcbcbc,#b6b6b6)"></div>
<div class="a" style="left:1px;top:979px;width:178px;height:46px;background:#9f9f9f;border-top:1px solid #555"></div>
<div class="row" style="top:619px;height:95px"><span style="top:5px">Main Thread</span></div>
<div class="row" style="top:714px;height:65px"><span style="top:5.3px">Render Thread</span></div>
<div class="row" style="top:779px;height:22px"><i></i><span style="top:4.2px">Job</span></div>
<div class="row" style="top:801px;height:20px"><i></i><span style="top:2.8px">Loading</span></div>
<div class="row" style="top:821px;height:20px"><i></i><span style="top:2.8px">Scripting Threads</span></div>
<div class="row" style="top:841px;height:32px"><i></i><span style="top:4.7px">Background Job</span></div>
<div class="row" style="top:873px;height:20px"><i></i><span style="top:2.8px">Profiler</span></div>
<div class="row" style="top:893px;height:26px"><i></i><span style="top:5.3px">Other Threads</span></div>
<div class="row" style="top:919px;height:20px"><i></i><span style="top:2.8px">ProgressiveJobs</span></div>
<div class="row" style="top:939px;height:20px"><i></i><span style="top:2.6px">CloudJob</span></div>
<div class="row" style="top:959px;height:20px"><i></i><span style="top:2.8px">BakingJobs</span></div>
<div class="a" style="left:180px;top:604px;width:1724px;height:421px;overflow:hidden"><div class="a" style="left:0;top:0;width:1724px;height:16px;background:linear-gradient(#a5a5a5,#979797)"></div><div class="a" style="left:111.3px;top:0;width:793.2px;height:16px;background:linear-gradient(#cbcbcb,#ababab)"></div><div class="a" style="left:0;top:15px;width:1724px;height:1px;background:#505050"></div><div class="sec" style="top:16px;height:95px"></div><div class="sec" style="top:111px;height:65px"></div><div class="sec" style="top:176px;height:22px"></div><div class="sec" style="top:198px;height:20px"></div><div class="sec" style="top:218px;height:20px"></div><div class="sec" style="top:238px;height:32px"></div><div class="sec" style="top:270px;height:20px"></div><div class="sec" style="top:290px;height:26px"></div><div class="sec" style="top:316px;height:20px"></div><div class="sec" style="top:336px;height:20px"></div><div class="sec" style="top:356px;height:20px"></div><div class="a" style="left:0;top:376px;width:1724px;height:45px;background:#464646"></div><div class="a" style="left:0;top:16px;width:111.3px;height:160px;background:rgba(255,255,255,.02)"></div><div class="a" style="left:904.5px;top:16px;width:819.5px;height:160px;background:rgba(255,255,255,.022)"></div><svg class="a" style="left:0;top:0" width="1724" height="421" viewBox="180 604 1724 421" shape-rendering="crispEdges"><line x1="191.5" x2="191.5" y1="617" y2="619" stroke="#111" stroke-opacity="0.3"/><line x1="205.5" x2="205.5" y1="620" y2="1025" stroke="#000" stroke-opacity=".115"/><line x1="205.5" x2="205.5" y1="615" y2="619" stroke="#111" stroke-opacity="0.4"/><line x1="219.5" x2="219.5" y1="617" y2="619" stroke="#111" stroke-opacity="0.3"/><line x1="234.5" x2="234.5" y1="620" y2="1025" stroke="#000" stroke-opacity=".115"/><line x1="234.5" x2="234.5" y1="615" y2="619" stroke="#111" stroke-opacity="0.4"/><line x1="248.5" x2="248.5" y1="617" y2="619" stroke="#111" stroke-opacity="0.3"/><line x1="262.5" x2="262.5" y1="620" y2="1025" stroke="#000" stroke-opacity=".115"/><line x1="262.5" x2="262.5" y1="615" y2="619" stroke="#111" stroke-opacity="0.4"/><line x1="277.5" x2="277.5" y1="617" y2="619" stroke="#111" stroke-opacity="0.3"/><line x1="291.5" x2="291.5" y1="620" y2="1025" stroke="#000" stroke-opacity=".115"/><line x1="291.5" x2="291.5" y1="604" y2="619" stroke="#000" stroke-opacity=".45"/><line x1="305.5" x2="305.5" y1="617" y2="619" stroke="#111" stroke-opacity="0.45"/><line x1="319.5" x2="319.5" y1="620" y2="1025" stroke="#000" stroke-opacity=".115"/><line x1="319.5" x2="319.5" y1="615" y2="619" stroke="#111" stroke-opacity="0.7"/><line x1="334.5" x2="334.5" y1="617" y2="619" stroke="#111" stroke-opacity="0.45"/><line x1="348.5" x2="348.5" y1="620" y2="1025" stroke="#000" stroke-opacity=".115"/><line x1="348.5" x2="348.5" y1="615" y2="619" stroke="#111" stroke-opacity="0.7"/><line x1="362.5" x2="362.5" y1="617" y2="619" stroke="#111" stroke-opacity="0.45"/><line x1="376.5" x2="376.5" y1="620" y2="1025" stroke="#000" stroke-opacity=".115"/><line x1="376.5" x2="376.5" y1="615" y2="619" stroke="#111" stroke-opacity="0.7"/><line x1="391.5" x2="391.5" y1="617" y2="619" stroke="#111" stroke-opacity="0.45"/><line x1="405.5" x2="405.5" y1="620" y2="1025" stroke="#000" stroke-opacity=".115"/><line x1="405.5" x2="405.5" y1="615" y2="619" stroke="#111" stroke-opacity="0.7"/><line x1="419.5" x2="419.5" y1="617" y2="619" stroke="#111" stroke-opacity="0.45"/><line x1="434.5" x2="434.5" y1="620" y2="1025" stroke="#000" stroke-opacity=".115"/><line x1="434.5" x2="434.5" y1="612" y2="619" stroke="#111" stroke-opacity="0.95"/><line x1="448.5" x2="448.5" y1="617" y2="619" stroke="#111" stroke-opacity="0.45"/><line x1="462.5" x2="462.5" y1="620" y2="1025" stroke="#000" stroke-opacity=".115"/><line x1="462.5" x2="462.5" y1="615" y2="619" stroke="#111" stroke-opacity="0.7"/><line x1="476.5" x2="476.5" y1="617" y2="619" stroke="#111" stroke-opacity="0.45"/><line x1="491.5" x2="491.5" y1="620" y2="1025" stroke="#000" stroke-opacity=".115"/><line x1="491.5" x2="491.5" y1="615" y2="619" stroke="#111" stroke-opacity="0.7"/><line x1="505.5" x2="505.5" y1="617" y2="619" stroke="#111" stroke-opacity="0.45"/><line x1="519.5" x2="519.5" y1="620" y2="1025" stroke="#000" stroke-opacity=".115"/><line x1="519.5" x2="519.5" y1="615" y2="619" stroke="#111" stroke-opacity="0.7"/><line x1="533.5" x2="533.5" y1="617" y2="619" stroke="#111" stroke-opacity="0.45"/><line x1="548.5" x2="548.5" y1="620" y2="1025" stroke="#000" stroke-opacity=".115"/><line x1="548.5" x2="548.5" y1="615" y2="619" stroke="#111" stroke-opacity="0.7"/><line x1="562.5" x2="562.5" y1="617" y2="619" stroke="#111" stroke-opacity="0.45"/><line x1="576.5" x2="576.5" y1="620" y2="1025" stroke="#000" stroke-opacity=".115"/><line x1="576.5" x2="576.5" y1="612" y2="619" stroke="#111" stroke-opacity="0.95"/><line x1="591.5" x2="591.5" y1="617" y2="619" stroke="#111" stroke-opacity="0.45"/><line x1="605.5" x2="605.5" y1="620" y2="1025" stroke="#000" stroke-opacity=".115"/><line x1="605.5" x2="605.5" y1="615" y2="619" stroke="#111" stroke-opacity="0.7"/><line x1="619.5" x2="619.5" y1="617" y2="619" stroke="#111" stroke-opacity="0.45"/><line x1="633.5" x2="633.5" y1="620" y2="1025" stroke="#000" stroke-opacity=".115"/><line x1="633.5" x2="633.5" y1="615" y2="619" stroke="#111" stroke-opacity="0.7"/><line x1="648.5" x2="648.5" y1="617" y2="619" stroke="#111" stroke-opacity="0.45"/><line x1="662.5" x2="662.5" y1="620" y2="1025" stroke="#000" stroke-opacity=".115"/><line x1="662.5" x2="662.5" y1="615" y2="619" stroke="#111" stroke-opacity="0.7"/><line x1="676.5" x2="676.5" y1="617" y2="619" stroke="#111" stroke-opacity="0.45"/><line x1="691.5" x2="691.5" y1="620" y2="1025" stroke="#000" stroke-opacity=".115"/><line x1="691.5" x2="691.5" y1="615" y2="619" stroke="#111" stroke-opacity="0.7"/><line x1="705.5" x2="705.5" y1="617" y2="619" stroke="#111" stroke-opacity="0.45"/><line x1="719.5" x2="719.5" y1="620" y2="1025" stroke="#000" stroke-opacity=".115"/><line x1="719.5" x2="719.5" y1="612" y2="619" stroke="#111" stroke-opacity="0.95"/><line x1="733.5" x2="733.5" y1="617" y2="619" stroke="#111" stroke-opacity="0.45"/><line x1="748.5" x2="748.5" y1="620" y2="1025" stroke="#000" stroke-opacity=".115"/><line x1="748.5" x2="748.5" y1="615" y2="619" stroke="#111" stroke-opacity="0.7"/><line x1="762.5" x2="762.5" y1="617" y2="619" stroke="#111" stroke-opacity="0.45"/><line x1="776.5" x2="776.5" y1="620" y2="1025" stroke="#000" stroke-opacity=".115"/><line x1="776.5" x2="776.5" y1="615" y2="619" stroke="#111" stroke-opacity="0.7"/><line x1="790.5" x2="790.5" y1="617" y2="619" stroke="#111" stroke-opacity="0.45"/><line x1="805.5" x2="805.5" y1="620" y2="1025" stroke="#000" stroke-opacity=".115"/><line x1="805.5" x2="805.5" y1="615" y2="619" stroke="#111" stroke-opacity="0.7"/><line x1="819.5" x2="819.5" y1="617" y2="619" stroke="#111" stroke-opacity="0.45"/><line x1="833.5" x2="833.5" y1="620" y2="1025" stroke="#000" stroke-opacity=".115"/><line x1="833.5" x2="833.5" y1="615" y2="619" stroke="#111" stroke-opacity="0.7"/><line x1="848.5" x2="848.5" y1="617" y2="619" stroke="#111" stroke-opacity="0.45"/><line x1="862.5" x2="862.5" y1="620" y2="1025" stroke="#000" stroke-opacity=".115"/><line x1="862.5" x2="862.5" y1="612" y2="619" stroke="#111" stroke-opacity="0.95"/><line x1="876.5" x2="876.5" y1="617" y2="619" stroke="#111" stroke-opacity="0.45"/><line x1="890.5" x2="890.5" y1="620" y2="1025" stroke="#000" stroke-opacity=".115"/><line x1="890.5" x2="890.5" y1="615" y2="619" stroke="#111" stroke-opacity="0.7"/><line x1="905.5" x2="905.5" y1="617" y2="619" stroke="#111" stroke-opacity="0.45"/><line x1="919.5" x2="919.5" y1="620" y2="1025" stroke="#000" stroke-opacity=".115"/><line x1="919.5" x2="919.5" y1="615" y2="619" stroke="#111" stroke-opacity="0.7"/><line x1="933.5" x2="933.5" y1="617" y2="619" stroke="#111" stroke-opacity="0.45"/><line x1="947.5" x2="947.5" y1="620" y2="1025" stroke="#000" stroke-opacity=".115"/><line x1="947.5" x2="947.5" y1="615" y2="619" stroke="#111" stroke-opacity="0.7"/><line x1="962.5" x2="962.5" y1="617" y2="619" stroke="#111" stroke-opacity="0.45"/><line x1="976.5" x2="976.5" y1="620" y2="1025" stroke="#000" stroke-opacity=".115"/><line x1="976.5" x2="976.5" y1="615" y2="619" stroke="#111" stroke-opacity="0.7"/><line x1="990.5" x2="990.5" y1="617" y2="619" stroke="#111" stroke-opacity="0.45"/><line x1="1005.5" x2="1005.5" y1="620" y2="1025" stroke="#000" stroke-opacity=".115"/><line x1="1005.5" x2="1005.5" y1="612" y2="619" stroke="#111" stroke-opacity="0.95"/><line x1="1019.5" x2="1019.5" y1="617" y2="619" stroke="#111" stroke-opacity="0.45"/><line x1="1033.5" x2="1033.5" y1="620" y2="1025" stroke="#000" stroke-opacity=".115"/><line x1="1033.5" x2="1033.5" y1="615" y2="619" stroke="#111" stroke-opacity="0.7"/><line x1="1047.5" x2="1047.5" y1="617" y2="619" stroke="#111" stroke-opacity="0.45"/><line x1="1062.5" x2="1062.5" y1="620" y2="1025" stroke="#000" stroke-opacity=".115"/><line x1="1062.5" x2="1062.5" y1="615" y2="619" stroke="#111" stroke-opacity="0.7"/><line x1="1076.5" x2="1076.5" y1="617" y2="619" stroke="#111" stroke-opacity="0.45"/><line x1="1090.5" x2="1090.5" y1="620" y2="1025" stroke="#000" stroke-opacity=".115"/><line x1="1090.5" x2="1090.5" y1="615" y2="619" stroke="#111" stroke-opacity="0.4"/><line x1="1104.5" x2="1104.5" y1="617" y2="619" stroke="#111" stroke-opacity="0.3"/><line x1="1119.5" x2="1119.5" y1="620" y2="1025" stroke="#000" stroke-opacity=".115"/><line x1="1119.5" x2="1119.5" y1="615" y2="619" stroke="#111" stroke-opacity="0.4"/><line x1="1133.5" x2="1133.5" y1="617" y2="619" stroke="#111" stroke-opacity="0.3"/><line x1="1147.5" x2="1147.5" y1="620" y2="1025" stroke="#000" stroke-opacity=".115"/><line x1="1147.5" x2="1147.5" y1="612" y2="619" stroke="#111" stroke-opacity="0.55"/><line x1="1162.5" x2="1162.5" y1="617" y2="619" stroke="#111" stroke-opacity="0.3"/><line x1="1176.5" x2="1176.5" y1="620" y2="1025" stroke="#000" stroke-opacity=".115"/><line x1="1176.5" x2="1176.5" y1="615" y2="619" stroke="#111" stroke-opacity="0.4"/><line x1="1190.5" x2="1190.5" y1="617" y2="619" stroke="#111" stroke-opacity="0.3"/><line x1="1204.5" x2="1204.5" y1="620" y2="1025" stroke="#000" stroke-opacity=".115"/><line x1="1204.5" x2="1204.5" y1="615" y2="619" stroke="#111" stroke-opacity="0.4"/><line x1="1219.5" x2="1219.5" y1="617" y2="619" stroke="#111" stroke-opacity="0.3"/><line x1="1233.5" x2="1233.5" y1="620" y2="1025" stroke="#000" stroke-opacity=".115"/><line x1="1233.5" x2="1233.5" y1="615" y2="619" stroke="#111" stroke-opacity="0.4"/><line x1="1247.5" x2="1247.5" y1="617" y2="619" stroke="#111" stroke-opacity="0.3"/><line x1="1262.5" x2="1262.5" y1="620" y2="1025" stroke="#000" stroke-opacity=".115"/><line x1="1262.5" x2="1262.5" y1="615" y2="619" stroke="#111" stroke-opacity="0.4"/><line x1="1276.5" x2="1276.5" y1="617" y2="619" stroke="#111" stroke-opacity="0.3"/><line x1="1290.5" x2="1290.5" y1="620" y2="1025" stroke="#000" stroke-opacity=".115"/><line x1="1290.5" x2="1290.5" y1="612" y2="619" stroke="#111" stroke-opacity="0.55"/><line x1="1304.5" x2="1304.5" y1="617" y2="619" stroke="#111" stroke-opacity="0.3"/><line x1="1319.5" x2="1319.5" y1="620" y2="1025" stroke="#000" stroke-opacity=".115"/><line x1="1319.5" x2="1319.5" y1="615" y2="619" stroke="#111" stroke-opacity="0.4"/><line x1="1333.5" x2="1333.5" y1="617" y2="619" stroke="#111" stroke-opacity="0.3"/><line x1="1347.5" x2="1347.5" y1="620" y2="1025" stroke="#000" stroke-opacity=".115"/><line x1="1347.5" x2="1347.5" y1="615" y2="619" stroke="#111" stroke-opacity="0.4"/><line x1="1361.5" x2="1361.5" y1="617" y2="619" stroke="#111" stroke-opacity="0.3"/><line x1="1376.5" x2="1376.5" y1="620" y2="1025" stroke="#000" stroke-opacity=".115"/><line x1="1376.5" x2="1376.5" y1="615" y2="619" stroke="#111" stroke-opacity="0.4"/><line x1="1390.5" x2="1390.5" y1="617" y2="619" stroke="#111" stroke-opacity="0.3"/><line x1="1404.5" x2="1404.5" y1="620" y2="1025" stroke="#000" stroke-opacity=".115"/><line x1="1404.5" x2="1404.5" y1="615" y2="619" stroke="#111" stroke-opacity="0.4"/><line x1="1419.5" x2="1419.5" y1="617" y2="619" stroke="#111" stroke-opacity="0.3"/><line x1="1433.5" x2="1433.5" y1="620" y2="1025" stroke="#000" stroke-opacity=".115"/><line x1="1433.5" x2="1433.5" y1="612" y2="619" stroke="#111" stroke-opacity="0.55"/><line x1="1447.5" x2="1447.5" y1="617" y2="619" stroke="#111" stroke-opacity="0.3"/><line x1="1461.5" x2="1461.5" y1="620" y2="1025" stroke="#000" stroke-opacity=".115"/><line x1="1461.5" x2="1461.5" y1="615" y2="619" stroke="#111" stroke-opacity="0.4"/><line x1="1476.5" x2="1476.5" y1="617" y2="619" stroke="#111" stroke-opacity="0.3"/><line x1="1490.5" x2="1490.5" y1="620" y2="1025" stroke="#000" stroke-opacity=".115"/><line x1="1490.5" x2="1490.5" y1="615" y2="619" stroke="#111" stroke-opacity="0.4"/><line x1="1504.5" x2="1504.5" y1="617" y2="619" stroke="#111" stroke-opacity="0.3"/><line x1="1518.5" x2="1518.5" y1="620" y2="1025" stroke="#000" stroke-opacity=".115"/><line x1="1518.5" x2="1518.5" y1="615" y2="619" stroke="#111" stroke-opacity="0.4"/><line x1="1533.5" x2="1533.5" y1="617" y2="619" stroke="#111" stroke-opacity="0.3"/><line x1="1547.5" x2="1547.5" y1="620" y2="1025" stroke="#000" stroke-opacity=".115"/><line x1="1547.5" x2="1547.5" y1="615" y2="619" stroke="#111" stroke-opacity="0.4"/><line x1="1561.5" x2="1561.5" y1="617" y2="619" stroke="#111" stroke-opacity="0.3"/><line x1="1576.5" x2="1576.5" y1="620" y2="1025" stroke="#000" stroke-opacity=".115"/><line x1="1576.5" x2="1576.5" y1="612" y2="619" stroke="#111" stroke-opacity="0.55"/><line x1="1590.5" x2="1590.5" y1="617" y2="619" stroke="#111" stroke-opacity="0.3"/><line x1="1604.5" x2="1604.5" y1="620" y2="1025" stroke="#000" stroke-opacity=".115"/><line x1="1604.5" x2="1604.5" y1="615" y2="619" stroke="#111" stroke-opacity="0.4"/><line x1="1618.5" x2="1618.5" y1="617" y2="619" stroke="#111" stroke-opacity="0.3"/><line x1="1633.5" x2="1633.5" y1="620" y2="1025" stroke="#000" stroke-opacity=".115"/><line x1="1633.5" x2="1633.5" y1="615" y2="619" stroke="#111" stroke-opacity="0.4"/><line x1="1647.5" x2="1647.5" y1="617" y2="619" stroke="#111" stroke-opacity="0.3"/><line x1="1661.5" x2="1661.5" y1="620" y2="1025" stroke="#000" stroke-opacity=".115"/><line x1="1661.5" x2="1661.5" y1="615" y2="619" stroke="#111" stroke-opacity="0.4"/><line x1="1675.5" x2="1675.5" y1="617" y2="619" stroke="#111" stroke-opacity="0.3"/><line x1="1690.5" x2="1690.5" y1="620" y2="1025" stroke="#000" stroke-opacity=".115"/><line x1="1690.5" x2="1690.5" y1="615" y2="619" stroke="#111" stroke-opacity="0.4"/><line x1="1704.5" x2="1704.5" y1="617" y2="619" stroke="#111" stroke-opacity="0.3"/><line x1="1718.5" x2="1718.5" y1="620" y2="1025" stroke="#000" stroke-opacity=".115"/><line x1="1718.5" x2="1718.5" y1="612" y2="619" stroke="#111" stroke-opacity="0.55"/><line x1="1733.5" x2="1733.5" y1="617" y2="619" stroke="#111" stroke-opacity="0.3"/><line x1="1747.5" x2="1747.5" y1="620" y2="1025" stroke="#000" stroke-opacity=".115"/><line x1="1747.5" x2="1747.5" y1="615" y2="619" stroke="#111" stroke-opacity="0.4"/><line x1="1761.5" x2="1761.5" y1="617" y2="619" stroke="#111" stroke-opacity="0.3"/><line x1="1775.5" x2="1775.5" y1="620" y2="1025" stroke="#000" stroke-opacity=".115"/><line x1="1775.5" x2="1775.5" y1="615" y2="619" stroke="#111" stroke-opacity="0.4"/><line x1="1790.5" x2="1790.5" y1="617" y2="619" stroke="#111" stroke-opacity="0.3"/><line x1="1804.5" x2="1804.5" y1="620" y2="1025" stroke="#000" stroke-opacity=".115"/><line x1="1804.5" x2="1804.5" y1="615" y2="619" stroke="#111" stroke-opacity="0.4"/><line x1="1818.5" x2="1818.5" y1="617" y2="619" stroke="#111" stroke-opacity="0.3"/><line x1="1833.5" x2="1833.5" y1="620" y2="1025" stroke="#000" stroke-opacity=".115"/><line x1="1833.5" x2="1833.5" y1="615" y2="619" stroke="#111" stroke-opacity="0.4"/><line x1="1847.5" x2="1847.5" y1="617" y2="619" stroke="#111" stroke-opacity="0.3"/><line x1="1861.5" x2="1861.5" y1="620" y2="1025" stroke="#000" stroke-opacity=".115"/><line x1="1861.5" x2="1861.5" y1="612" y2="619" stroke="#111" stroke-opacity="0.55"/><line x1="1875.5" x2="1875.5" y1="617" y2="619" stroke="#111" stroke-opacity="0.3"/><line x1="1890.5" x2="1890.5" y1="620" y2="1025" stroke="#000" stroke-opacity=".115"/><line x1="1890.5" x2="1890.5" y1="615" y2="619" stroke="#111" stroke-opacity="0.4"/></svg><div class="t" style="left:114.8px;top:2px;color:#333;letter-spacing:.5px">0ms</div><div class="t" style="left:257.6px;top:2px;color:#333;letter-spacing:.5px">5ms</div><div class="t" style="left:400.3px;top:2px;color:#333;letter-spacing:.5px">10ms</div><div class="t" style="left:543.0px;top:2px;color:#333;letter-spacing:.5px">15ms</div><div class="t" style="left:685.8px;top:2px;color:#333;letter-spacing:.5px">20ms</div><div class="t" style="left:828.5px;top:2px;color:#333;letter-spacing:.5px">25ms</div><div class="t" style="left:971.3px;top:2px;color:#666;letter-spacing:.5px">30ms</div><div class="t" style="left:1114.0px;top:2px;color:#666;letter-spacing:.5px">35ms</div><div class="t" style="left:1256.8px;top:2px;color:#666;letter-spacing:.5px">40ms</div><div class="t" style="left:1399.5px;top:2px;color:#666;letter-spacing:.5px">45ms</div><div class="t" style="left:1542.3px;top:2px;color:#666;letter-spacing:.5px">50ms</div><div class="t" style="left:1685.0px;top:2px;color:#666;letter-spacing:.5px">55ms</div><div class="a" style="left:111px;top:16px;width:1px;height:405px;background:rgba(255,255,255,.2)"></div><div class="a" style="left:904px;top:0px;width:1px;height:15px;background:rgba(255,255,255,.7)"></div><div class="a" style="left:904px;top:16px;width:1px;height:405px;background:rgba(255,255,255,.27)"></div><div class="bar" style="left:0.0px;top:17px;width:111.0px;height:15px;background:#4f4f4f;color:#000;"></div><div class="t" style="left:0px;top:18px;color:#676767;letter-spacing:.3px;line-height:13px">orLoop (5.31ms)</div><div class="bar" style="left:107.0px;top:17px;width:4.5px;height:15px;background:#53552f;color:#000;"></div><div class="bar" style="left:106.0px;top:33px;width:2.0px;height:15px;background:#4a4b33;color:#000;"></div><div class="bar" style="left:108.5px;top:33px;width:3.0px;height:15px;background:#55572e;color:#000;"></div><div class="bar" style="left:106.0px;top:49px;width:2.0px;height:15px;background:#4a4b33;color:#000;"></div><div class="bar" style="left:109.0px;top:49px;width:2.8px;height:15px;background:#6a6c2a;color:#000;"></div><div class="bar" style="left:106.0px;top:65px;width:2.0px;height:15px;background:#4a4b33;color:#000;"></div><div class="bar" style="left:111.8px;top:17px;width:377.2px;height:15px;background:#71742a;color:#000;">PlayerLoop (13.21ms)</div><div class="bar" style="left:489.0px;top:17px;width:38.0px;background:#575757;color:#1e1e1e;text-align:left"><span style="position:absolute;left:-1.7px">Loop (1.</span></div><div class="bar" style="left:527.0px;top:17px;width:177.0px;height:15px;background:#71742a;color:#000;">PlayerLoop (6.19ms)</div><div class="bar" style="left:704.0px;top:17px;width:196.0px;height:15px;background:#575757;color:#111;">EditorLoop (6.87ms)</div><div class="bar" style="left:900.0px;top:17px;width:4.0px;height:15px;background:#72722a;color:#000;"></div><div class="bar" style="left:899.0px;top:33px;width:5.0px;height:15px;background:#72722a;color:#000;"></div><div class="bar" style="left:899.0px;top:49px;width:6.0px;height:15px;background:#76762a;color:#000;"></div><div class="bar" style="left:899.0px;top:65px;width:2.0px;height:15px;background:#6a6a2a;color:#000;"></div><div class="bar" style="left:115.0px;top:33px;width:269.0px;height:15px;background:#71742a;color:#000;letter-spacing:.41px">FixedUpdate.PhysicsFixedUpdate (9.47ms)</div><div class="bar" style="left:111.8px;top:33px;width:3.2px;height:15px;background:#85881f;color:#000;"></div><div class="bar" style="left:384.5px;top:33px;width:88.0px;background:#71742a;color:#000;text-align:left"><span style="position:absolute;left:2.0px">RunBehaviourUpdate</span></div><div class="bar" style="left:472.5px;top:33px;width:2.5px;height:15px;background:#8c8c20;color:#000;"></div><div class="bar" style="left:475.0px;top:33px;width:12.0px;height:15px;background:#71742a;color:#000;"></div><div class="bar" style="left:487.0px;top:33px;width:2.7px;height:15px;background:#8f9a1c;color:#000;"></div><div class="bar" style="left:526.0px;top:33px;width:179.0px;height:15px;background:#7d961a;color:#000;">Camera.Render (6.16ms)</div><div class="bar" style="left:704.0px;top:33px;width:1.3px;height:15px;background:#8fb030;color:#000;"></div><div class="bar" style="left:111.8px;top:49px;width:2.2px;height:15px;background:#7d7f22;color:#000;"></div><div class="bar" style="left:114.0px;top:49px;width:266.0px;height:15px;background:#b5660f;color:#000;"></div><div class="bar" style="left:116.0px;top:49px;width:198.6px;height:15px;background:#b5660f;color:#000;letter-spacing:.5px">Physics.Processing (7.04ms)</div><div class="bar" style="left:114.0px;top:49px;width:2.0px;height:15px;background:#e07e08;color:#000;"></div><div class="bar" style="left:329.0px;top:49px;width:51.0px;background:#b5660f;color:#000;text-align:left"><span style="position:absolute;left:-12.7px">UpdateBodies</span></div><div class="bar" style="left:380.0px;top:49px;width:4.5px;height:15px;background:#5e5e30;color:#000;"></div><div class="bar" style="left:384.5px;top:49px;width:1.5px;height:15px;background:#4aa0c0;color:#000;"></div><div class="bar" style="left:386.0px;top:49px;width:88.0px;background:#71742a;color:#000;text-align:left"><span style="position:absolute;left:-27.5px">BehaviourUpdate (3.0</span></div><div class="bar" style="left:474.0px;top:49px;width:3.0px;height:15px;background:#90a51a;color:#000;"></div><div class="bar" style="left:477.0px;top:49px;width:10.0px;height:15px;background:#7d961a;color:#000;"></div><div class="bar" style="left:487.0px;top:49px;width:2.5px;height:15px;background:#c07a10;color:#000;"></div><div class="bar" style="left:526.0px;top:49px;width:2.0px;height:15px;background:#86a30f;color:#000;"></div><div class="bar" style="left:528.0px;top:49px;width:1.5px;height:15px;background:#6a7a20;color:#000;"></div><div class="bar" style="left:529.5px;top:49px;width:11.5px;height:15px;background:#7d961a;color:#000;"></div><div class="bar" style="left:541.0px;top:49px;width:36.0px;background:#7d8f1c;color:#4b5b0e;text-align:left"><span style="position:absolute;left:-24.6px">DepthTextu</span></div><div class="bar" style="left:577.0px;top:49px;width:127.0px;height:15px;background:#7d961a;color:#000;">Drawing (4.33ms)</div><div class="bar" style="left:698.0px;top:49px;width:4.0px;height:15px;background:#86a30f;color:#000;"></div><div class="bar" style="left:702.5px;top:49px;width:1.0px;height:15px;background:#55a0b0;color:#000;"></div><div class="bar" style="left:114.0px;top:65px;width:35.8px;height:15px;background:#b5660f;color:#000;"></div><div class="bar" style="left:173.0px;top:65px;width:25.8px;height:15px;background:#b5660f;color:#000;"></div><div class="bar" style="left:207.0px;top:65px;width:3.8px;height:15px;background:#b5660f;color:#000;"></div><div class="bar" style="left:228.0px;top:65px;width:89.0px;height:15px;background:#b5660f;color:#000;"></div><div class="bar" style="left:128.0px;top:65px;width:1.0px;height:15px;background:#d87a08;color:#000;"></div><div class="bar" style="left:140.0px;top:65px;width:1.0px;height:15px;background:#d87a08;color:#000;"></div><div class="bar" style="left:145.0px;top:65px;width:1.0px;height:15px;background:#d87a08;color:#000;"></div><div class="bar" style="left:148.0px;top:65px;width:1.3px;height:15px;background:#d87a08;color:#000;"></div><div class="bar" style="left:176.2px;top:65px;width:1.3px;height:15px;background:#d87a08;color:#000;"></div><div class="bar" style="left:179.0px;top:65px;width:1.0px;height:15px;background:#d87a08;color:#000;"></div><div class="bar" style="left:182.0px;top:65px;width:4.3px;height:15px;background:#d87a08;color:#000;"></div><div class="bar" style="left:186.9px;top:65px;width:2.1px;height:15px;background:#d87a08;color:#000;"></div><div class="bar" style="left:191.8px;top:65px;width:2.0px;height:15px;background:#d87a08;color:#000;"></div><div class="bar" style="left:195.0px;top:65px;width:3.8px;height:15px;background:#d87a08;color:#000;"></div><div class="bar" style="left:207.0px;top:65px;width:4.0px;height:15px;background:#d87a08;color:#000;"></div><div class="bar" style="left:295.0px;top:65px;width:1.8px;height:15px;background:#d87a08;color:#000;"></div><div class="bar" style="left:304.3px;top:65px;width:1.3px;height:15px;background:#d87a08;color:#000;"></div><div class="bar" style="left:306.2px;top:65px;width:1.5px;height:15px;background:#d87a08;color:#000;"></div><div class="bar" style="left:315.0px;top:65px;width:1.8px;height:15px;background:#d87a08;color:#000;"></div><div class="bar" style="left:111.8px;top:65px;width:3.2px;height:15px;background:#7d7f22;color:#000;"></div><div class="t" style="left:264.5px;top:66px;color:rgba(40,25,5,.5);letter-spacing:.6px;line-height:13px">solver</div><div class="bar" style="left:382.5px;top:65px;width:1.5px;height:15px;background:#666;color:#000;"></div><div class="bar" style="left:384.0px;top:65px;width:1.2px;height:15px;background:#d07a10;color:#000;"></div><div class="bar" style="left:385.2px;top:65px;width:87.3px;height:15px;background:#388eb0;color:#000;"></div><div class="bar" style="left:388.0px;top:65px;width:6.0px;height:15px;background:#3f7f9c;color:#000;"></div><div class="bar" style="left:472.5px;top:65px;width:1.5px;height:15px;background:#8a7a2a;color:#000;"></div><div class="bar" style="left:474.0px;top:65px;width:3.0px;height:15px;background:#86971c;color:#000;"></div><div class="bar" style="left:477.5px;top:65px;width:9.5px;height:15px;background:#5c5c5c;color:#000;"></div><div class="bar" style="left:487.0px;top:65px;width:2.0px;height:15px;background:#86971c;color:#000;"></div><div class="bar" style="left:526.0px;top:65px;width:1.0px;height:15px;background:#3aa0c0;color:#000;"></div><div class="bar" style="left:527.0px;top:65px;width:3.5px;height:15px;background:#86a30f;color:#000;"></div><div class="bar" style="left:531.0px;top:65px;width:9.0px;height:15px;background:#5c5c5c;color:#000;"></div><div class="bar" style="left:540.0px;top:65px;width:1.0px;height:15px;background:#3aa0c0;color:#000;"></div><div class="bar" style="left:541.0px;top:65px;width:1.5px;height:15px;background:#86a30f;color:#000;"></div><div class="bar" style="left:544.7px;top:65px;width:4.1px;height:15px;background:#5c5c5c;color:#000;"></div><div class="bar" style="left:548.8px;top:65px;width:28.2px;background:#7d8f1c;color:#5f6f14;text-align:left"><span style="position:absolute;left:-6.3px">ss.Job</span></div><div class="bar" style="left:577.0px;top:65px;width:126.0px;background:#7d961a;color:#000;text-align:left"><span style="position:absolute;left:-2.3px">er.OpaqueGeometry (4.1</span></div><div class="bar" style="left:698.5px;top:65px;width:1.0px;height:15px;background:#55a0b0;color:#000;"></div><div class="bar" style="left:111.8px;top:81px;width:3.2px;height:15px;background:#7c8f1c;color:#000;"></div><div class="bar" style="left:381.0px;top:81px;width:3.0px;height:15px;background:#77771f;color:#000;"></div><div class="bar" style="left:387.0px;top:81px;width:7.0px;height:15px;background:#80762a;color:#000;"></div><div class="bar" style="left:389.0px;top:81px;width:4.0px;height:15px;background:#9a7030;color:#000;"></div><div class="bar" style="left:394.0px;top:81px;width:1.6px;height:15px;background:#d0305a;color:#000;"></div><div class="bar" style="left:421.0px;top:81px;width:1.8px;height:15px;background:#77771f;color:#000;"></div><div class="bar" style="left:428.0px;top:81px;width:1.8px;height:15px;background:#77771f;color:#000;"></div><div class="bar" style="left:432.0px;top:81px;width:1.8px;height:15px;background:#77771f;color:#000;"></div><div class="bar" style="left:445.0px;top:81px;width:4.0px;height:15px;background:#77771f;color:#000;"></div><div class="bar" style="left:471.0px;top:81px;width:1.3px;height:15px;background:#d0305a;color:#000;"></div><div class="bar" style="left:472.3px;top:81px;width:4.7px;height:15px;background:#388eb0;color:#000;"></div><div class="bar" style="left:477.0px;top:81px;width:9.0px;height:15px;background:#7d8a1c;color:#000;"></div><div class="bar" style="left:527.0px;top:81px;width:15.0px;height:15px;background:#7d961a;color:#000;"></div><div class="bar" style="left:552.8px;top:81px;width:22.2px;background:#7d951a;color:#6f8416;text-align:left"><span style="position:absolute;left:0.7px">er.Flu</span></div><div class="bar" style="left:577.5px;top:81px;width:2.0px;height:15px;background:#666;color:#000;"></div><div class="bar" style="left:580.0px;top:81px;width:27.0px;height:15px;background:#7d961a;color:#000;"></div><div class="bar" style="left:606.6px;top:81px;width:93.4px;background:#7d961a;color:#000;text-align:left"><span style="position:absolute;left:-6.3px">wardOpaque.Rende</span></div><div class="bar" style="left:697.5px;top:81px;width:2.5px;height:15px;background:#86a30f;color:#000;"></div><div class="bar" style="left:111.8px;top:97px;width:3.2px;height:13px;background:#86a012;color:#000;"></div><div class="bar" style="left:386.0px;top:97px;width:10.0px;height:13px;background:#7b7a22;color:#000;"></div><div class="bar" style="left:472.0px;top:97px;width:3.5px;height:13px;background:#77771f;color:#000;"></div><div class="bar" style="left:475.5px;top:97px;width:1.5px;height:13px;background:#8a60a0;color:#000;"></div><div class="bar" style="left:527.0px;top:97px;width:2.0px;height:13px;background:#7a8a1c;color:#000;"></div><div class="bar" style="left:529.0px;top:97px;width:2.0px;height:13px;background:#86a30f;color:#000;"></div><div class="bar" style="left:552.0px;top:97px;width:24.0px;height:13px;background:#86a60c;color:#000;"></div><div class="bar" style="left:593.0px;top:97px;width:2.5px;height:13px;background:#86971c;color:#000;"></div><div class="bar" style="left:596.0px;top:97px;width:10.0px;height:13px;background:#5c5c5c;color:#000;"></div><div class="bar" style="left:606px;top:97px;width:94px;height:13px;background:#7d961a;text-align:left"><span style="position:absolute;left:0.5px">erShadow</span><span style="position:absolute;left:46.5px;width:48px;height:13px;overflow:hidden;background:#7d961a;border-left:1px solid #8aa828"><span style="position:absolute;left:-4px">RenderLo</span></span></div><svg class="a" style="left:854px;top:106px" width="14" height="8" viewBox="0 0 14 8"><path d="M1.5 1.5 L7 5.5 L12.5 1.5" fill="none" stroke="#f2f2f2" stroke-width="1.6"/></svg><svg class="a" style="left:854px;top:173px" width="14" height="8" viewBox="0 0 14 8"><path d="M1.5 1.5 L7 5.5 L12.5 1.5" fill="none" stroke="#f2f2f2" stroke-width="1.6"/></svg><div class="bar" style="left:109.0px;top:112px;width:2.8px;height:15px;background:#5f6a2a;color:#000;"></div><div class="bar" style="left:109.0px;top:128px;width:2.8px;height:15px;background:#4c4c4c;color:#000;"></div><div class="bar" style="left:111.8px;top:112px;width:377.2px;height:15px;background:#738d16;color:#000;">Gfx.ProcessCommands (13.21ms)</div><div class="bar" style="left:111.8px;top:128px;width:2.2px;height:15px;background:#8a8a1f;color:#000;"></div><div class="bar" style="left:114.5px;top:128px;width:373.0px;height:15px;background:#565656;color:#111;">Gfx.WaitForCommands (13.10ms)</div><div class="bar" style="left:487.8px;top:128px;width:1.7px;height:15px;background:#8aa810;color:#000;"></div><div class="bar" style="left:527.8px;top:112px;width:177.2px;height:15px;background:#738d16;color:#000;">Gfx.ProcessCommands (6.21ms)</div><div class="bar" style="left:528.8px;top:128px;width:14.2px;height:15px;background:#565656;color:#000;"></div><div class="bar" style="left:543.0px;top:128px;width:163.0px;height:15px;background:#7d961a;color:#000;">Camera.Render (5.68ms)</div><div class="bar" style="left:705.0px;top:128px;width:1.0px;height:15px;background:#8fb040;color:#000;"></div><div class="bar" style="left:543.0px;top:144px;width:45.0px;background:#7d961a;color:#000;text-align:left"><span style="position:absolute;left:-22.7px">DepthTexture</span></div><div class="bar" style="left:587.0px;top:144px;width:1.3px;height:15px;background:#86a30f;color:#000;"></div><div class="bar" style="left:588.3px;top:144px;width:18.7px;height:15px;background:#565656;color:#000;"></div><div class="bar" style="left:607.0px;top:144px;width:99.0px;height:15px;background:#7d961a;color:#000;">Drawing (3.42ms)</div><div class="bar" style="left:542.0px;top:160px;width:2.0px;height:15px;background:#86971c;color:#000;"></div><div class="bar" style="left:544.0px;top:160px;width:5.0px;height:15px;background:#5c5c5c;color:#000;"></div><div class="bar" style="left:549.0px;top:160px;width:39.0px;background:#7d951a;color:#48580d;text-align:left"><span style="position:absolute;left:0.5px">ss.Job (</span></div><div class="bar" style="left:607.0px;top:160px;width:99.0px;background:#7d961a;color:#000;text-align:left"><span style="position:absolute;left:0.5px">OpaqueGeometry (3</span></div><div class="bar" style="left:703.0px;top:160px;width:2.0px;height:15px;background:#86a30f;color:#000;"></div><div class="bar" style="left:901.0px;top:112px;width:4.0px;height:15px;background:#6f8c14;color:#000;"></div><div class="bar" style="left:901.0px;top:128px;width:4.0px;height:15px;background:#5a5a5a;color:#000;"></div><div class="a" style="left:0;top:110px;width:1724px;height:1px;background:rgba(0,0,0,.0)"></div><div class="a" style="left:0;top:112px;width:1724px;height:4px;background:rgba(0,0,0,.12)"></div><div class="a" style="left:0;top:176px;width:1724px;height:7px;background:rgba(0,0,0,.13)"></div><div class="bar" style="left:111.8px;top:202px;width:1.2px;height:8px;background:#6f6f22;color:#000;"></div><div class="bar" style="left:903.5px;top:199px;width:1.5px;height:8px;background:#6f8f12;color:#000;"></div><div class="bar" style="left:0;top:271px;width:904.5px;height:8px;background:#76752a"></div><div class="bar" style="left:0;top:271px;width:111.3px;height:8px;background:#5d5c2c"></div><div class="bar" style="left:112.0px;top:271px;width:2px;height:8px;background:#84822a"></div><div class="bar" style="left:119.0px;top:271px;width:2px;height:8px;background:#84822a"></div><div class="bar" style="left:122.5px;top:271px;width:1.5px;height:8px;background:#84822a"></div><div class="bar" style="left:125.5px;top:271px;width:2px;height:8px;background:#84822a"></div><div class="bar" style="left:129.0px;top:271px;width:3px;height:8px;background:#84822a"></div><div class="bar" style="left:134.0px;top:271px;width:1.5px;height:8px;background:#84822a"></div><div class="bar" style="left:398.0px;top:271px;width:2px;height:8px;background:#84822a"></div><div class="bar" style="left:404.0px;top:271px;width:1.5px;height:8px;background:#84822a"></div><div class="bar" style="left:407.5px;top:271px;width:1.5px;height:8px;background:#84822a"></div><div class="bar" style="left:413.0px;top:271px;width:1.5px;height:8px;background:#84822a"></div><div class="bar" style="left:416.0px;top:271px;width:1.5px;height:8px;background:#84822a"></div><div class="bar" style="left:419.0px;top:271px;width:3px;height:8px;background:#84822a"></div><div class="bar" style="left:426.0px;top:271px;width:1.5px;height:8px;background:#84822a"></div><div class="bar" style="left:429.5px;top:271px;width:1.5px;height:8px;background:#84822a"></div><div class="bar" style="left:433.0px;top:271px;width:2px;height:8px;background:#84822a"></div><div class="bar" style="left:439.0px;top:271px;width:1.5px;height:8px;background:#84822a"></div><div class="bar" style="left:442.0px;top:271px;width:3px;height:8px;background:#84822a"></div><div class="bar" style="left:448.0px;top:271px;width:3px;height:8px;background:#84822a"></div><div class="bar" style="left:453.0px;top:271px;width:1.5px;height:8px;background:#84822a"></div><div class="bar" style="left:456.5px;top:271px;width:2px;height:8px;background:#84822a"></div><div class="bar" style="left:460.0px;top:271px;width:3px;height:8px;background:#84822a"></div><div class="bar" style="left:464.5px;top:271px;width:3px;height:8px;background:#84822a"></div><div class="bar" style="left:469.0px;top:271px;width:3px;height:8px;background:#84822a"></div><div class="bar" style="left:474.0px;top:271px;width:2px;height:8px;background:#84822a"></div><div class="bar" style="left:510.0px;top:271px;width:2px;height:8px;background:#84822a"></div><div class="bar" style="left:516.0px;top:271px;width:3px;height:8px;background:#84822a"></div><div class="bar" style="left:555.0px;top:271px;width:2px;height:8px;background:#84822a"></div><div class="bar" style="left:560.0px;top:271px;width:1.5px;height:8px;background:#84822a"></div><div class="bar" style="left:563.5px;top:271px;width:3px;height:8px;background:#84822a"></div><div class="bar" style="left:568.5px;top:271px;width:1.5px;height:8px;background:#84822a"></div><div class="bar" style="left:573.0px;top:271px;width:3px;height:8px;background:#84822a"></div><div class="bar" style="left:610.0px;top:271px;width:2px;height:8px;background:#84822a"></div><div class="bar" style="left:616.0px;top:271px;width:2px;height:8px;background:#84822a"></div><div class="bar" style="left:619.5px;top:271px;width:1.5px;height:8px;background:#84822a"></div><div class="bar" style="left:625.0px;top:271px;width:1.5px;height:8px;background:#84822a"></div><div class="bar" style="left:629.5px;top:271px;width:1.5px;height:8px;background:#84822a"></div><div class="bar" style="left:635.0px;top:271px;width:2px;height:8px;background:#84822a"></div><div class="bar" style="left:638.5px;top:271px;width:3px;height:8px;background:#84822a"></div><div class="bar" style="left:643.0px;top:271px;width:3px;height:8px;background:#84822a"></div><div class="bar" style="left:649.0px;top:271px;width:2px;height:8px;background:#84822a"></div><div class="bar" style="left:666.0px;top:271px;width:3px;height:8px;background:#84822a"></div><div class="bar" style="left:673.0px;top:271px;width:3px;height:8px;background:#84822a"></div><div class="bar" style="left:680.0px;top:271px;width:1.5px;height:8px;background:#84822a"></div><div class="bar" style="left:683.0px;top:271px;width:2px;height:8px;background:#84822a"></div><div class="bar" style="left:689.0px;top:271px;width:3px;height:8px;background:#84822a"></div><div class="bar" style="left:693.5px;top:271px;width:1.5px;height:8px;background:#84822a"></div><div class="bar" style="left:116px;top:271px;width:3px;height:8px;background:#6e6e6e"></div><div class="a" style="left:1.0px;top:271px;height:8px;overflow:hidden;white-space:nowrap;color:#6f6e3a;line-height:12px"><span style="position:relative;top:2px">Read (5.85ms)</span></div><div class="a" style="left:223.7px;top:271px;height:8px;overflow:hidden;white-space:nowrap;color:#000;line-height:12px"><span style="position:relative;top:2px">File Read (9.09ms)</span></div><div class="a" style="left:471.0px;top:271px;height:8px;overflow:hidden;white-space:nowrap;color:#000;line-height:12px"><span style="position:relative;top:2px">ile Read (2.88ms</span></div><div class="a" style="left:575.0px;top:271px;height:8px;overflow:hidden;white-space:nowrap;color:#000;line-height:12px"><span style="position:relative;top:2px">Read (2.01</span></div><div class="a" style="left:751.0px;top:271px;height:8px;overflow:hidden;white-space:nowrap;color:#000;line-height:12px"><span style="position:relative;top:2px">File Read (7.42ms)</span></div><div class="a" style="left:112.0px;top:281px;width:3.0px;height:8px;background:#656565"></div><div class="a" style="left:399.0px;top:281px;width:2.0px;height:8px;background:#656565"></div><div class="a" style="left:407.5px;top:281px;width:2.0px;height:8px;background:#656565"></div><div class="a" style="left:415.5px;top:281px;width:2.0px;height:8px;background:#656565"></div><div class="a" style="left:424.0px;top:281px;width:2.0px;height:8px;background:#656565"></div><div class="a" style="left:432.0px;top:281px;width:2.0px;height:8px;background:#656565"></div><div class="a" style="left:440.5px;top:281px;width:2.0px;height:8px;background:#656565"></div><div class="a" style="left:449.0px;top:281px;width:2.0px;height:8px;background:#656565"></div><div class="a" style="left:456.0px;top:281px;width:2.0px;height:8px;background:#656565"></div><div class="a" style="left:464.0px;top:281px;width:2.0px;height:8px;background:#656565"></div><div class="a" style="left:472.0px;top:281px;width:2.0px;height:8px;background:#656565"></div><div class="a" style="left:463.0px;top:281px;width:1.5px;height:8px;background:#656565"></div><div class="a" style="left:554.5px;top:281px;width:7.0px;height:8px;background:#656565"></div><div class="a" style="left:562.3px;top:281px;width:1.5px;height:8px;background:#656565"></div><div class="a" style="left:564.6px;top:281px;width:6.0px;height:8px;background:#656565"></div><div class="a" style="left:571.4px;top:281px;width:1.5px;height:8px;background:#656565"></div><div class="a" style="left:573.7px;top:281px;width:2.0px;height:8px;background:#656565"></div><div class="a" style="left:630.0px;top:281px;width:2.0px;height:8px;background:#656565"></div><div class="a" style="left:632.9px;top:281px;width:1.5px;height:8px;background:#656565"></div><div class="a" style="left:635.3px;top:281px;width:2.0px;height:8px;background:#656565"></div><div class="a" style="left:638.2px;top:281px;width:3.0px;height:8px;background:#656565"></div><div class="a" style="left:642.1px;top:281px;width:2.0px;height:8px;background:#656565"></div><div class="a" style="left:645.0px;top:281px;width:3.0px;height:8px;background:#656565"></div><div class="a" style="left:648.9px;top:281px;width:2.0px;height:8px;background:#656565"></div><div class="a" style="left:651.8px;top:281px;width:2.0px;height:8px;background:#656565"></div><div class="a" style="left:667.0px;top:281px;width:2.0px;height:8px;background:#656565"></div><div class="a" style="left:669.9px;top:281px;width:4.0px;height:8px;background:#656565"></div><div class="a" style="left:674.8px;top:281px;width:3.0px;height:8px;background:#656565"></div><div class="a" style="left:678.7px;top:281px;width:2.0px;height:8px;background:#656565"></div><div class="a" style="left:681.6px;top:281px;width:2.0px;height:8px;background:#656565"></div><div class="a" style="left:689.5px;top:281px;width:3.5px;height:8px;background:#656565"></div><div class="a" style="left:904.0px;top:281px;width:1.0px;height:8px;background:#656565"></div></div>
<div class="a" style="left:1904px;top:41px;width:15px;height:544px;background:linear-gradient(90deg,#858585,#b6b6b6 14%,#aaa 60%,#8e8e8e)"></div>
<div class="a" style="left:1904px;top:56px;width:15px;height:512px;border-radius:7px;background:linear-gradient(90deg,#7c7c7c,#a6a6a6 14%,#bdbdbd 45%,#bdbdbd 62%,#a6a6a6 88%,#8a8a8a)"></div>
<i class="a" style="left:1907.5px;top:48px;border-bottom:5px solid #222;border-left:4px solid transparent;border-right:4px solid transparent"></i>
<i class="a" style="left:1907.5px;top:574px;border-top:5px solid #222;border-left:4px solid transparent;border-right:4px solid transparent"></i>
<div class="a" style="left:1905px;top:58px;width:13px;height:180px;border-radius:6.5px;background:linear-gradient(90deg,#8b98ae,#62728f 55%,#4e5e7c);border:1px solid #3d4c69"></div>
<div class="a" style="left:1904px;top:620px;width:15px;height:405px;background:linear-gradient(90deg,#858585,#b6b6b6 14%,#aaa 60%,#8e8e8e)"></div>
<div class="a" style="left:1904px;top:635px;width:15px;height:373px;border-radius:7px;background:linear-gradient(90deg,#7c7c7c,#a6a6a6 14%,#bdbdbd 45%,#bdbdbd 62%,#a6a6a6 88%,#8a8a8a)"></div>
<i class="a" style="left:1907.5px;top:627px;border-bottom:5px solid #222;border-left:4px solid transparent;border-right:4px solid transparent"></i>
<i class="a" style="left:1907.5px;top:1014px;border-top:5px solid #222;border-left:4px solid transparent;border-right:4px solid transparent"></i>
<div class="a" style="left:1905px;top:638px;width:13px;height:368px;border-radius:6.5px;background:linear-gradient(90deg,#8b98ae,#62728f 55%,#4e5e7c);border:1px solid #3d4c69"></div>
<div class="a" style="left:1904px;top:604px;width:15px;height:16px;background:linear-gradient(#bdbdbd,#b4b4b4);border-bottom:1px solid #555"></div>
<div class="a" style="left:180px;top:1025px;width:1724px;height:14px;background:linear-gradient(#858585,#b6b6b6 14%,#aaa 60%,#8e8e8e)"></div>
<div class="a" style="left:196px;top:1025px;width:1694px;height:14px;border-radius:7px;background:linear-gradient(#7c7c7c,#a6a6a6 14%,#bdbdbd 45%,#bdbdbd 62%,#a6a6a6 88%,#8a8a8a)"></div>
<div class="a" style="left:1px;top:1025px;width:179px;height:14px;background:linear-gradient(#c2c2c2,#b2b2b2);border-top:1px solid #8a8a8a"></div>
<i class="a" style="left:186px;top:1028px;border-right:5px solid #222;border-top:4px solid transparent;border-bottom:4px solid transparent"></i>
<i class="a" style="left:1894px;top:1028px;border-left:5px solid #222;border-top:4px solid transparent;border-bottom:4px solid transparent"></i>
<div class="a" style="left:199px;top:1026px;width:1688px;height:13px;border-radius:6.5px;background:linear-gradient(#8b98ae,#62728f 55%,#4e5e7c);border:1px solid #3d4c69"></div>
<div class="a" style="left:210px;top:1027px;width:1px;height:11px;background:#3d4c69"></div>
<div class="a" style="left:1875px;top:1027px;width:1px;height:11px;background:#3d4c69"></div>
<div class="a" style="left:1905px;top:1025px;width:14px;height:14px;background:#444"></div>
<div class="a" style="left:180px;top:41px;width:3px;height:153px;background:#1e1e1e"></div><div class="a" style="left:179px;top:41px;width:1px;height:984px;background:#4c4c4c"></div>
<div class="a" style="left:0;top:0;width:1920px;height:1px;background:#1a84d8"></div>
<div class="a" style="left:0;top:1039px;width:1920px;height:1px;background:#1a84d8"></div>
<div class="a" style="left:0;top:0;width:1px;height:1040px;background:#1a84d8"></div>
<div class="a" style="left:1919px;top:0;width:1px;height:1040px;background:#1a84d8"></div>
<div class="a" style="left:0;top:322px;width:180.2px;height:134px;border:3px solid #ed1c24"></div>
</div></body></html>
